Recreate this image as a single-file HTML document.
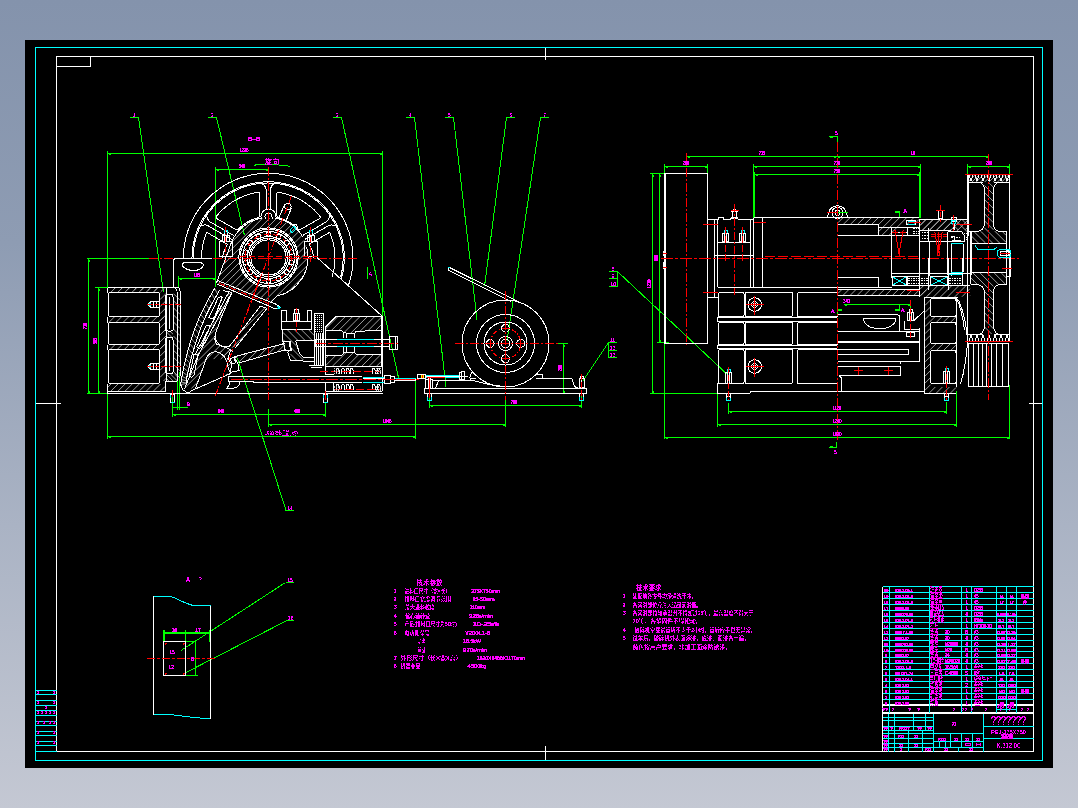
<!DOCTYPE html>
<html lang="zh"><head><meta charset="utf-8"><title>PEJ 颚式破碎机 装配图</title>
<style>
html,body{margin:0;padding:0}
body{width:1078px;height:808px;overflow:hidden;background:#8795ad linear-gradient(to bottom,#8493ac 0%,#8e9cb3 30%,#aab3c4 65%,#c4c8d3 100%);font-family:"Liberation Sans","Noto Sans CJK SC",sans-serif}
#sheet{position:absolute;left:25px;top:40px;width:1028px;height:728px;background:#000}
svg{position:absolute;left:0;top:0;width:1078px;height:808px}
svg path{fill:none;stroke-width:1}
svg text{fill:#ff00ff;font-family:"Liberation Sans","Noto Sans CJK SC",sans-serif}
</style></head><body>
<div id="sheet"></div>
<svg width="1078" height="808" viewBox="0 0 1078 808">
<g shape-rendering="crispEdges">
<path stroke="#ffffff" d="M56.5 56.5H1033.5V751.5H56.5ZM56.5 66.5L90.5 66.5L90.5 56.5M35.5 403.5L61 403.5M1029 403.5L1042.5 403.5M545.5 47.5L545.5 59.5M545.5 746L545.5 760.5"/>
<path stroke="#00ffff" d="M35.5 47.5H1042.5V760.5H35.5ZM35.5 690.5L56.5 690.5M35.5 694.5L56.5 694.5M35.5 700.5L56.5 700.5M35.5 705.5L56.5 705.5M35.5 710.5L56.5 710.5M35.5 715.5L56.5 715.5M35.5 721.5L56.5 721.5M35.5 725.5L56.5 725.5M35.5 731.5L56.5 731.5M35.5 735.5L56.5 735.5M35.5 741.5L56.5 741.5M35.5 745.5L56.5 745.5M35.5 751.5L56.5 751.5"/>
</g>
<g shape-rendering="crispEdges">
<path stroke="#00ff00" d="M130 117.5L138.5 117.5M138.5 117.5L163.5 292.5M208 117.5L216.5 117.5M216.5 117.5L244.5 235.5M333 117.5L341.5 117.5M341.5 117.5L399 380M406 117.5L414.5 117.5M414.5 117.5L446 386.5M445 117.5L453.5 117.5M453.5 117.5L477 319.5M506.5 117.5L515 117.5M506.5 117.5L484.5 286.5M540.5 117.5L549 117.5M540.5 117.5L507 341M286 510.5L294 510.5M286 510.5L237.5 358.5M107.5 153.5L382.5 153.5M110.5 154.5L108.5 154.5M379.5 154.5L381.5 154.5M107.5 151L107.5 292M107.5 393L107.5 439M382.5 151L382.5 316M215.5 169.5L268.5 169.5M218.5 170.5L216.5 170.5M265.5 170.5L267.5 170.5M215.5 167L215.5 287M254 165.5L257 164.5L272 164.5L285 165.5L290.5 166.5M88.5 258.5L88.5 393.5M89.5 261.5L89.5 259.5M89.5 390.5L89.5 392.5M86.5 258.5L149 258.5M86.5 393.5L107.5 393.5M98.5 287.5L98.5 393.5M99.5 290.5L99.5 288.5M99.5 390.5L99.5 392.5M95 287.5L107.5 287.5M178.5 278.5L215.5 278.5M181.5 279.5L179.5 279.5M212.5 279.5L214.5 279.5M178.5 276L178.5 287M172.5 390L172.5 417M177.5 372L177.5 409.5M179.5 372L179.5 409.5M172.5 407.5L188 407.5M172.5 414.5L325.5 414.5M175.5 415.5L173.5 415.5M322.5 415.5L324.5 415.5M325.5 402L325.5 417M268.5 424.5L505.5 424.5M271.5 425.5L269.5 425.5M502.5 425.5L504.5 425.5M268.5 409L268.5 427M107.5 436.5L415.5 436.5M110.5 437.5L108.5 437.5M412.5 437.5L414.5 437.5M415.5 381L415.5 439M367.5 267L367.5 279M429.5 405.5L581.5 405.5M432.5 406.5L430.5 406.5M578.5 406.5L580.5 406.5M429.5 396L429.5 408M581.5 396L581.5 408M563.5 343.5L563.5 393.5M564.5 346.5L564.5 344.5M564.5 390.5L564.5 392.5M558 343.5L568 343.5M558 393.5L568 393.5M505.5 400L505.5 427M582.5 381.5L608.5 342.5M608.5 342.5L608.5 357.5M608.5 342.5L617 342.5M608.5 350.5L617 350.5M608.5 357.5L617 357.5M617.5 271.5L730 377M617.5 271.5L617.5 286.5M609 271.5L617.5 271.5M609 278.5L617.5 278.5M609 286.5L617.5 286.5M686.5 156.5L836.5 156.5M689.5 157.5L687.5 157.5M833.5 157.5L835.5 157.5M836.5 156.5L988.5 156.5M839.5 157.5L837.5 157.5M985.5 157.5L987.5 157.5M988.5 154L988.5 159M664.5 166.5L707.5 166.5M667.5 167.5L665.5 167.5M704.5 167.5L706.5 167.5M664.5 164L664.5 176M707.5 164L707.5 181M753.5 166.5L920.5 166.5M756.5 167.5L754.5 167.5M917.5 167.5L919.5 167.5M754.5 174.5L919.5 174.5M757.5 175.5L755.5 175.5M916.5 175.5L918.5 175.5M753.5 164L753.5 218M754.5 172L754.5 218M919.5 172L919.5 218M920.5 164L920.5 218M967.5 166.5L1009.5 166.5M970.5 167.5L968.5 167.5M1006.5 167.5L1008.5 167.5M967.5 164L967.5 174M1009.5 164L1009.5 174M829 136.5L837.5 136.5M837.5 136.5L837.5 142M830 137.5L833 137.5M836.5 442L836.5 447.5M829 447.5L836.5 447.5M830 446.5L833 446.5M895 211.5L900 211.5M895 212.5L900 212.5M899.5 211L899.5 218M652.5 173.5L652.5 393.5M653.5 176.5L653.5 174.5M653.5 390.5L653.5 392.5M659.5 173.5L659.5 342.5M660.5 176.5L660.5 174.5M660.5 339.5L660.5 341.5M650 173.5L665 173.5M657 342.5L669 342.5M650 393.5L718 393.5M664.5 343L664.5 439M728.5 411.5L946.5 411.5M731.5 412.5L729.5 412.5M943.5 412.5L945.5 412.5M728.5 403L728.5 414M946.5 402L946.5 414M717.5 424.5L956.5 424.5M720.5 425.5L718.5 425.5M953.5 425.5L955.5 425.5M717.5 391L717.5 427M956.5 391L956.5 427M664.5 437.5L1009.5 437.5M667.5 438.5L665.5 438.5M1006.5 438.5L1008.5 438.5M1009.5 385L1009.5 439M844 304.5L910.5 304.5M847 305.5L845 305.5M907.5 305.5L909.5 305.5M837.5 309.5L842 309.5M837.5 310.5L842 310.5M837.5 309.5L837.5 314M910.5 302.5L910.5 310M895 309.5L899.5 309.5M895 310.5L899.5 310.5M899.5 304.5L899.5 311M163.5 632.5L210.5 632.5M163.5 633.5L210.5 633.5M163.5 630L163.5 641.5M164.5 630L164.5 641.5M185.5 630L185.5 641.5M210.5 630L210.5 642M209.5 630L209.5 642M185.5 641.5L196 641.5M195.5 641.5L195.5 675.5M185.5 675.5L198 675.5M181 650.5L285.5 582.5M285.5 582.5L294 582.5M184 673.5L287 620.5M287 620.5L294 620.5"/>
</g>
<g shape-rendering="crispEdges">
<path stroke="#c8c8c8" shape-rendering="geometricPrecision" style="stroke-width:.8" d="M114.6 288.5L115.1 288.0M121.2 288.9L122.1 288.0M127.8 289.4L129.2 288.0M134.4 289.8L136.3 288.0M141.1 290.3L143.3 288.0M147.7 290.7L150.4 288.0M154.3 291.2L157.5 288.0M160.9 291.6L164.5 288.0M110.6 292.5L115.1 288.0M117.6 292.5L122.1 288.0M124.7 292.5L129.2 288.0M131.8 292.5L136.3 288.0M138.8 292.5L143.3 288.0M145.9 292.5L150.4 288.0M153.0 292.5L157.5 288.0M108.8 322.5L114.3 317.0M115.9 322.5L121.4 317.0M123.0 322.5L128.5 317.0M130.0 322.5L135.5 317.0M137.1 322.5L142.6 317.0M144.2 322.5L149.7 317.0M151.3 322.5L156.8 317.0M158.3 322.5L163.8 317.0M165.4 322.5L166.5 321.4M110.1 349.5L114.6 345.0M117.2 349.5L121.7 345.0M124.3 349.5L128.8 345.0M131.3 349.5L135.8 345.0M138.4 349.5L142.9 345.0M145.5 349.5L150.0 345.0M152.5 349.5L157.0 345.0M159.6 349.5L164.1 345.0M108.0 387.0L111.0 384.0M110.5 391.5L118.0 384.0M117.6 391.5L125.1 384.0M124.7 391.5L132.2 384.0M131.8 391.5L139.3 384.0M138.8 391.5L146.3 384.0M145.9 391.5L153.4 384.0M153.0 391.5L160.5 384.0M160.0 391.5L165.0 386.5M160.0 292.5L160.5 292.0M160.0 299.6L166.5 293.1M160.0 306.7L166.5 300.2M160.0 313.8L166.5 307.3M160.0 320.8L166.5 314.3M160.0 327.9L166.5 321.4M160.0 335.0L166.5 328.5M160.0 342.0L166.5 335.5M160.0 349.1L166.5 342.6M160.0 356.2L166.5 349.7M160.0 363.3L166.5 356.8M160.0 370.3L166.5 363.8M160.0 377.4L166.5 370.9M163.5 381.0L166.5 378.0M173.5 293.7L180.0 300.2M173.5 300.8L180.0 307.3M173.5 307.9L180.0 314.4M173.5 314.9L180.0 321.4M173.5 322.0L180.0 328.5M173.5 329.1L180.0 335.6M173.5 336.1L180.0 342.6M173.5 343.2L180.0 349.7M173.5 350.3L180.0 356.8M173.5 357.3L180.0 363.8M173.5 364.4L180.0 370.9M173.5 371.5L180.0 378.0M169.8 331.0L173.0 334.2M166.5 332.0L172.0 337.5M166.5 336.2L167.8 337.5M174.6 374.0L177.0 376.4M170.4 374.0L177.0 380.6M166.5 374.4L173.1 381.0M166.5 378.6L168.9 381.0"/>
<path stroke="#ffffff" d="M107.5 393.5L383 393.5M107.5 393.5L107.5 383.5M107.5 287.5L178.5 287.5M107.5 287.5L107.5 293M107.5 316.5L107.5 322.5M107.5 344.5L107.5 349.5M107.5 383.5L107.5 391.5M107.5 391.5L165.5 391.5M165.5 391.5L165.5 381.5L177 381.5M110.5 292.5H157.5Q159.5 292.5 159.5 294.5V314.5Q159.5 316.5 157.5 316.5H110.5Q108.5 316.5 108.5 314.5V294.5Q108.5 292.5 110.5 292.5ZM110.5 322.5H157.5Q159.5 322.5 159.5 324.5V342.5Q159.5 344.5 157.5 344.5H110.5Q108.5 344.5 108.5 342.5V324.5Q108.5 322.5 110.5 322.5ZM110.5 349.5H157.5Q159.5 349.5 159.5 351.5V381.5Q159.5 383.5 157.5 383.5H110.5Q108.5 383.5 108.5 381.5V351.5Q108.5 349.5 110.5 349.5ZM166.5 287.5L166.5 381.5M177.5 295L177.5 381M178.5 287.5Q180.5 290 180.5 296V376M175.5 287.5Q177.5 291 177.5 296M165.5 296Q165.5 294.5 167.5 294.5H171Q173 294.5 173 296.5V329.5Q173 331 171 331H167.5Q165.5 331 165.5 329.5ZM165.5 339Q165.5 337.5 167.5 337.5H171Q173 337.5 173 339.5V372Q173 373.5 171 373.5H167.5Q165.5 373.5 165.5 372ZM169.5 297L169.5 329M169.5 340L169.5 371M159 301.5L151 301.5L148 304.5L151 307.5L159 307.5M153.5 301.5L153.5 307.5M156.5 301.5L156.5 307.5M159 363.5L151 363.5L148 366.5L151 369.5L159 369.5M153.5 363.5L153.5 369.5M156.5 363.5L156.5 369.5M173.5 287.5V261Q173.5 258.5 176 258.5H212M184 262.5H201L203.5 264.5Q203.5 267.5 199.5 269.5Q193.5 271.5 187.5 269.5Q182 267 182 264.5ZM170.5 394.5H174.5V402.5H170.5Z"/>
<path stroke="#00ffff" d="M151 303L149 304.5L151 306M151 365L149 366.5L151 368M170.5 394.5L170.5 397.5M170.5 402.5L174.5 402.5"/>
<path stroke="#ff0000" d="M172.5 390L172.5 397"/>
<path stroke="#ff0000" stroke-dasharray="6 2 4 2" d="M147 304.5L182 304.5M147 366.5L182 366.5"/>
</g>
<g shape-rendering="crispEdges">
<path stroke="#c8c8c8" shape-rendering="geometricPrecision" style="stroke-width:.8" d="M232.5 241.3L252.3 221.5M229.5 251.3L262.3 218.5M229.1 258.8L240.2 247.8M258.8 229.2L269.8 218.1M229.8 265.2L238.6 256.4M267.4 227.6L276.2 218.8M231.3 270.7L239.0 263.0M274.0 228.0L281.7 220.3M233.5 275.6L240.6 268.5M279.5 229.6L286.6 222.5M236.1 280.1L243.0 273.2M284.2 232.0L291.1 225.1M239.2 284.0L246.0 277.3M288.3 235.0L295.0 228.2M242.8 287.5L249.6 280.7M291.7 238.6L298.5 231.8M246.9 290.5L253.8 283.6M294.6 242.8L301.5 235.9M251.4 293.1L258.7 285.8M296.8 247.7L304.1 240.4M256.4 295.1L264.4 287.2M298.2 253.4L306.1 245.4M262.2 296.4L271.3 287.4M298.4 260.3L301.1 257.5M301.1 257.5L307.4 251.2M268.7 297.0L280.9 284.8M295.8 269.9L308.0 257.7M276.6 296.2L307.2 265.6M288.0 291.8L302.8 277.0"/>
<path stroke="#ffffff" d="M183.40 258.00A84.8 84.8 0 1 1 348.38 285.61M192.00 258.00A76.2 76.2 0 1 1 341.45 279.00M193.20 258.00A75 75 0 1 1 340.64 277.41M302.6 235.6L326.8 221.6Q329.5 219.4 329.6 215.6M304.8 239.4L329.0 225.4Q332.3 224.2 335.6 226.0M266.0 208.5L266.0 189.0Q265.4 185.6 262.2 183.6M270.4 208.5L270.4 189.0Q271.0 185.6 274.2 183.6M231.6 239.4L207.4 225.4Q204.1 224.2 200.8 226.0M233.8 235.6L209.6 221.6Q206.9 219.4 206.8 215.6M319.7 216.0L317.7 213.6L314.1 209.8L310.1 206.4L305.9 203.2L301.4 200.4L296.8 198.0L292.0 195.9L287.0 194.2L281.9 192.9L278.9 192.4Q276.7 192.0 276.7 194.2L276.7 215.2Q276.7 217.4 278.8 217.9L279.3 218.0L281.8 218.8L284.2 219.7L286.6 220.8L288.9 222.1L291.2 223.4L293.3 225.0L295.4 226.6L297.3 228.4L297.6 228.7Q299.1 230.3 301.0 229.2L319.2 218.8Q321.1 217.7 319.7 216.0ZM257.5 192.4L254.5 192.9L249.4 194.2L244.4 195.9L239.6 198.0L234.9 200.4L230.5 203.2L226.3 206.4L222.3 209.8L218.7 213.6L216.7 216.0Q215.3 217.7 217.2 218.8L235.4 229.2Q237.3 230.3 238.8 228.7L239.1 228.4L241.0 226.6L243.1 225.0L245.2 223.4L247.4 222.1L249.8 220.8L252.2 219.7L254.6 218.8L257.1 218.0L257.6 217.9Q259.7 217.4 259.7 215.2L259.7 194.2Q259.7 192.0 257.5 192.4ZM227.4 244.3L206.7 232.3A66.7 66.7 0 0 0 201.5 258.0M227.4 244.3Q223.4 250.3 222.4 258.0M309.0 244.3L329.7 232.3A66.7 66.7 0 0 1 332.0 277.5M309.0 244.3Q313.0 250.3 314.0 258.0M230.91 243.82A40 40 0 0 1 261.55 218.11M275.45 218.11A40 40 0 0 1 303.14 237.50M306.65 247.28A39.5 39.5 0 0 1 276.71 296.14M238.9 257.5a29.6 29.6 0 1 0 59.2 0a29.6 29.6 0 1 0 -59.2 0M240.3 257.5a28.2 28.2 0 1 0 56.4 0a28.2 28.2 0 1 0 -56.4 0M242.5 257.5a26 26 0 1 0 52 0a26 26 0 1 0 -52 0M247.5 257.5a21 21 0 1 0 42 0a21 21 0 1 0 -42 0M249.3 257.5a19.2 19.2 0 1 0 38.4 0a19.2 19.2 0 1 0 -38.4 0M250.9 257.5a17.6 17.6 0 1 0 35.2 0a17.6 17.6 0 1 0 -35.2 0M266.2 234a2.3 2.3 0 1 0 4.6 0a2.3 2.3 0 1 0 -4.6 0M256.004 236.327a2.3 2.3 0 1 0 4.6 0a2.3 2.3 0 1 0 -4.6 0M247.827 242.848a2.3 2.3 0 1 0 4.6 0a2.3 2.3 0 1 0 -4.6 0M243.289 252.271a2.3 2.3 0 1 0 4.6 0a2.3 2.3 0 1 0 -4.6 0M243.289 262.729a2.3 2.3 0 1 0 4.6 0a2.3 2.3 0 1 0 -4.6 0M247.827 272.152a2.3 2.3 0 1 0 4.6 0a2.3 2.3 0 1 0 -4.6 0M256.004 278.673a2.3 2.3 0 1 0 4.6 0a2.3 2.3 0 1 0 -4.6 0M266.2 281a2.3 2.3 0 1 0 4.6 0a2.3 2.3 0 1 0 -4.6 0M276.396 278.673a2.3 2.3 0 1 0 4.6 0a2.3 2.3 0 1 0 -4.6 0M284.573 272.152a2.3 2.3 0 1 0 4.6 0a2.3 2.3 0 1 0 -4.6 0M289.111 262.729a2.3 2.3 0 1 0 4.6 0a2.3 2.3 0 1 0 -4.6 0M289.111 252.271a2.3 2.3 0 1 0 4.6 0a2.3 2.3 0 1 0 -4.6 0M284.573 242.848a2.3 2.3 0 1 0 4.6 0a2.3 2.3 0 1 0 -4.6 0M276.396 236.327a2.3 2.3 0 1 0 4.6 0a2.3 2.3 0 1 0 -4.6 0M261 219V216.5A7.5 7.5 0 0 1 276 216.5V219M265 218.5V216.5A3.5 3.5 0 0 1 272 216.5V218.5M219 241.5H232V256H219ZM222 235.5H229V241.5H222ZM224.5 235.5L224.5 241.5M226.5 235.5L226.5 241.5M224 230.5H227V235.5H224ZM304 241.5H317V256H304ZM307 235.5H314V241.5H307ZM309.5 235.5L309.5 241.5M311.5 235.5L311.5 241.5M309 230.5H312V235.5H309ZM278.5 219L284.5 204.5M285.5 222L291.5 208M284.8 206.5a3.2 3.2 0 1 0 6.4 0a3.2 3.2 0 1 0 -6.4 0M292 224.5L296 224.5L298 228"/>
<path stroke="#00ffff" d="M224 232.5L224 230.5L227 230.5L227 232.5M309 232.5L309 230.5L312 230.5L312 232.5M290 230L294 226L296 229L292 233Z"/>
<path stroke="#ff0000" stroke-dasharray="5 2 1 2" d="M245.0 257.5a23.5 23.5 0 1 0 47 0a23.5 23.5 0 1 0 -47 0M225.5 227L225.5 262M310.5 227L310.5 262"/>
<path stroke="#ff0000" stroke-dasharray="7 2 1 2" d="M291.5 196L246 316"/>
<path stroke="#ff0000" stroke-dasharray="9 2 2 2" d="M149 258.5L173 258.5M213 258.5L358 258.5M268.5 167L268.5 400"/>
<path stroke="#ff0000" stroke-dasharray="6 3" d="M240 256.5L318 256.5"/>
</g>
<g shape-rendering="crispEdges">
<path stroke="#c8c8c8" shape-rendering="geometricPrecision" style="stroke-width:.8" d="M214.57 288.38L217.491 293.804M211.599 293.687L214.649 298.897M208.627 298.993L211.84 303.99M205.814 304.22L209.291 309.084M203.266 309.313L206.743 314.177M200.717 314.407L204.484 319.063M198.649 319.183L202.534 323.73M196.74 323.853L200.583 328.397M194.858 328.577L198.849 333.43M193.159 333.67L197.15 338.524M191.46 338.763L195.491 343.617M189.867 343.857L193.963 348.71M188.381 348.95L192.436 353.804M186.896 354.043L191.166 358.606M185.783 358.72L190.061 363.224M184.724 363.337L188.957 367.841M183.718 367.861L188.103 371.674M182.868 372.105L187.254 375.495M182.019 376.349L186.635 378.704M181.433 379.53L186.425 380.826M181.007 382.075L186.216 382.948M180.58 384.62L186.16 383.51M308.3 329.5L314.0 335.2M301.2 329.5L312.4 340.7M294.2 329.5L305.3 340.7M287.1 329.5L298.2 340.7M282.8 332.3L294.1 343.6M282.8 339.4L284.8 341.4M290.1 346.6L291.4 348.0M294.0 343.5L297.6 347.1M291.3 347.9L303.4 360.0M290.6 354.2L297.1 360.7M325.5 329.0L338.3 316.2M331.8 330.1L345.7 316.2M339.1 330.1L353.0 316.2M344.1 332.5L360.4 316.2M350.5 333.4L367.8 316.2M360.2 331.1L375.1 316.2M367.7 331.0L382.0 316.6M375.2 330.8L382.0 324.0M325.7 358.2L328.8 355.1M325.7 365.6L336.1 355.1M332.3 366.3L346.3 352.4M339.7 366.3L353.6 352.4M347.0 366.3L358.7 354.6M354.4 366.3L366.1 354.6M361.7 366.3L373.4 354.6M369.1 366.3L380.8 354.6M376.4 366.3L382.0 360.8"/>
<path stroke="#ffffff" d="M214.57 288.38L206.77 302.31L200.08 315.68L195.07 327.94L190.61 341.31L186.71 354.68L183.93 366.8L181.7 377.94L180.58 384.62L182.81 389.64L186.71 392.42L190.06 392.98M219.58 290.06L212.12 303.43L205.43 316.8L200.31 329.05L195.85 342.42L191.84 355.79L188.94 367.91L186.71 377.94L186.16 383.51M221.25 296.74L218.47 297.3L209 317.35L211.78 319.03L214.57 317.35L221.81 297.86ZM222.14 297.3L215.13 317.35M209.55 325.15L206.21 325.15L196.74 346.88L199.19 348.55L200.97 347.44L210.11 326.27ZM210.45 325.71L201.42 347.44M197.3 354.54L193.96 354.54L189.5 375.71L191.73 377.38L193.96 375.15L197.86 355.65ZM222.92 290.61L231.84 292.28M231.84 292.28L197.86 355.79M197.86 355.65L184.48 389.08M229.05 291.73L195.07 354.68M217.91 280.58L270.84 302.31M216.8 283.93L268.05 305.65M270.84 302.31L274.74 303.43L279.75 306.77L276.96 309L272.51 307.88L268.05 305.65M231.84 292.84L222.37 314.57L215.13 334.62Q214.01 342.42 222.37 346.32L229.05 346.88L260.25 306.21M234.62 348.55L266.94 308.44M260.25 306.21L266.94 308.44M195.63 387.97L206.21 359Q208.44 352.31 215.68 351.75Q223.48 352.87 226.82 361.23Q227.94 369.03 230.72 373.48L190.06 391.31M214.57 337.83L216.24 343.96L223.48 346.74L230.72 349.53L233.51 352.31M230.72 349.53L227.94 358.44L231.84 364.57L230.17 372.37L239.08 370.7L237.97 363.45L234.07 357.88L236.85 356.77M230.17 358.44L234.07 357.33L235.74 362.9L231.84 364.01ZM234.07 356.77L284.76 343.4M239.08 362.9L285.88 349.53M228 376.5L326 376.5M228 376.5L228 381.5L253.5 381.5L253.5 382.5L362 382.5M229.5 382V384L227 388H234Q239.5 387 240 382M281.5 321.5H311.5V329.5H281.5ZM281.5 321.5L281.5 310.5L286.5 310.5L286.5 321.5M307.5 321.5L307.5 310.5L311.5 310.5L311.5 321.5M293.5 313.5H299.5V320.5H293.5ZM294.5 309.5H298.5V313.5H294.5ZM295.5 313.5L295.5 320.5M297.5 313.5L297.5 320.5M282.81 329.53L282.81 341.23L288.94 341.78L290.61 349.03L287.83 352.37L290.61 360.72L314.01 361.28M295.63 340.67L314.01 340.67M295.63 340.67L299.53 353.48L303.43 357.38L314.01 357.38M283.37 341.23L290.61 341.23L291.17 350.14L285.04 350.7ZM314.5 313.5H323.5V365.5H314.5ZM316.5 333L316.5 365.5M318.5 333L318.5 365.5M320.5 333L320.5 365.5M322.5 333L322.5 365.5M309 365.5L314 365.5M311 367.5L322 367.5M325.5 327.5L325.5 375M325.15 327.3L336.3 316.16L381.98 316.16L381.98 366.85L334.62 366.85M325.71 330.08L341.31 330.08L343.54 332.31L346.88 333.43L354.68 333.43L356.35 331.2L381.98 330.64M325.71 355.15L341.87 355.15L344.09 352.37L354.68 352.37L356.35 354.6L381.98 354.6M343.54 332.31L343.54 337.88M354.68 333.43L354.68 337.88M346.88 333.43L346.88 337.88M343.54 346.8L343.54 352.37M354.68 346.8L354.68 352.37M346.88 346.8L346.88 352.37M325.71 366.3L325.71 374.65L333.51 374.65M325.71 366.85L334.62 366.85M315.13 339.55L335.74 339.55L335.74 339L389.78 339M315.13 346.24L335.74 346.24L335.74 346.8L389.78 346.8M315.5 339.5L315.5 346.5M389.5 336.5H397.5V349.5H389.5ZM395.5 336.5L395.5 349.5M317 257.5L382 316M382.5 316L382.5 391M325.5 382.5H333.5V391.5H325.5ZM325.5 391.5L382 391.5M326 376.5L362 376.5M363 378.5L384 378.5M336 374V370Q337.5 367 339 370V374M336 390V386Q337.5 383 339 386V390M341.5 374V370Q343.0 367 344.5 370V374M341.5 390V386Q343.0 383 344.5 386V390M346 374V370Q347.5 367 349 370V374M346 390V386Q347.5 383 349 386V390M350 374V370Q351.5 367 353 370V374M350 390V386Q351.5 383 353 386V390M372 374V370Q373.5 367 375 370V374M372 390V386Q373.5 383 375 386V390M377 374V370Q378.5 367 380 370V374M377 390V386Q378.5 383 380 386V390M384.5 375.5H390.5V383.5H384.5ZM390.5 376.5H394.5V382.5H390.5ZM395 380.5L415.5 380.5M415.5 378L415.5 381M323.5 394.5H327.5V402.5H323.5Z"/>
<path stroke="#00ffff" d="M276.96 306.21L280.31 307.88L277.52 308.77M337 339.5L373.5 339.5M337 346.5L373.5 346.5M363 377.5L384 377.5M363 382.5L384 382.5M395 378.5L415.5 378.5M323.5 395L323.5 398M327.5 395L327.5 398M323.5 402.5L327.5 402.5"/>
<path stroke="#ff0000" d="M396 379.5L415 379.5M325.5 391L325.5 400"/>
<path stroke="#ff0000" stroke-dasharray="6 2 2 2" d="M219.03 283.15L269.72 303.98"/>
<path stroke="#ff0000" stroke-dasharray="7 2 2 2" d="M259.14 280.03L214.57 397.99"/>
<path stroke="#ff0000" stroke-dasharray="12 2 3 2" d="M231 379.5L420 379.5"/>
<path stroke="#ff0000" stroke-dasharray="5 2" d="M296.5 307.5L296.5 332"/>
<path stroke="#ffffff" stroke-dasharray="1 1" d="M315 315.5L323 315.5M315 317.5L323 317.5M315 319.5L323 319.5M315 321.5L323 321.5M315 323.5L323 323.5M315 325.5L323 325.5M315 327.5L323 327.5M315 329.5L323 329.5M315 331.5L323 331.5"/>
<path stroke="#ff0000" stroke-dasharray="10 2 3 2" d="M316 343.5L398 343.5"/>
<path stroke="#ff0000" stroke-dasharray="8 3" d="M320 371.5L381 371.5M334 389.5L381 389.5"/>
<path stroke="#c8c8c8" stroke-dasharray="1 1" d="M334 368.5L340 368.5M334 370L340 370M334 371.5L340 371.5M334 373L340 373M334 386L340 386M334 387.5L340 387.5M334 389L340 389M334 390.5L340 390.5M376 368.5L382 368.5M376 370L382 370M376 371.5L382 371.5M376 373L382 373M376 386L382 386M376 387.5L382 387.5M376 389L382 389M376 390.5L382 390.5"/>
</g>
<g shape-rendering="crispEdges">
<path stroke="#c8c8c8" shape-rendering="geometricPrecision" style="stroke-width:.8" d="M231.6 242.2L231.9 241.9M227.4 253.4L230.7 250.1M223.3 264.6L229.5 258.4M219.1 275.8L230.1 264.9M218.4 283.7L232.1 270.0M223.6 285.5L234.1 275.0M228.8 287.4L236.1 280.1M234.0 289.2L239.8 283.4M239.2 291.1L243.6 286.8M244.5 292.9L247.3 290.1M249.7 294.8L251.6 292.9M254.9 296.6L257.1 294.4M260.1 298.5L262.7 295.9M265.3 300.4L268.3 297.4M270.5 302.2L274.3 298.4M226.1 297.1L230.8 292.4M217.8 312.5L227.5 302.9M209.6 327.8L222.1 315.3M201.3 343.2L218.1 326.4M196.4 355.2L214.8 336.7M201.5 357.1L215.5 343.1M206.6 359.1L220.3 345.4M213.6 359.1L226.1 346.6M220.7 359.1L230.5 349.3M227.8 359.1L228.0 358.9M194.5 364.2L201.6 357.0M189.7 376.0L206.7 359.0M185.0 387.7L202.4 370.4M191.4 388.4L198.0 381.8M220.3 352.4L221.9 350.8M224.5 355.4L230.2 349.6M199.9 387.0L200.5 386.4M226.5 360.4L228.1 358.8M212.5 381.5L213.9 380.0M227.6 366.4L230.9 363.1M225.1 375.9L227.3 373.7M229.5 371.5L230.6 370.5M239.5 333.3L265.0 307.8M232.0 347.8L248.5 331.3M235.5 358.5L238.3 355.6M238.7 362.4L247.9 353.1M247.7 360.4L257.5 350.6M257.6 357.6L267.1 348.0M267.5 354.8L276.7 345.5M277.4 352.0L284.9 344.4"/>
<path stroke="#ffffff" d="M232 241L216.5 283M270.8 302.3L277.5 295.5"/>
</g>
<g shape-rendering="crispEdges">
<path stroke="#ffffff" d="M462 343.5a43.5 43.5 0 1 0 87 0a43.5 43.5 0 1 0 -87 0M476.5 343.5a29 29 0 1 0 58 0a29 29 0 1 0 -58 0M484 343.5a21.5 21.5 0 1 0 43 0a21.5 21.5 0 1 0 -43 0M498.5 343.5a7 7 0 1 0 14 0a7 7 0 1 0 -14 0M501.3 343.5a4.2 4.2 0 1 0 8.4 0a4.2 4.2 0 1 0 -8.4 0M516.8 343.5a3.9 3.9 0 1 0 7.8 0a3.9 3.9 0 1 0 -7.8 0M501.6 358.7a3.9 3.9 0 1 0 7.8 0a3.9 3.9 0 1 0 -7.8 0M486.4 343.5a3.9 3.9 0 1 0 7.8 0a3.9 3.9 0 1 0 -7.8 0M501.6 328.3a3.9 3.9 0 1 0 7.8 0a3.9 3.9 0 1 0 -7.8 0M448.65 267.08L518.85 302M447.91 270.06L511.42 301.62M448.65 267.08L447.91 270.06M469.64 378.13L471.49 372.93L474.28 372.93M542.06 378.13L542.06 374.05L537.42 374.05M470.5 378.5L476 378.5M536 378.5L572 378.5M571.77 378.69L574.56 386.49L578.27 388.35M470.57 379.99L489.14 384.63L503.99 386.49M470.57 378.13L470.57 380.92M424.5 388.5H586.5V393.5H424.5ZM425.07 388.35L425.07 379.99L432.5 379.99L432.5 388.35M439 379.99L435.28 388.35M433 380.5L470 380.5M417.5 374.5H425.5V378.5H417.5ZM426 376.5L468 376.5M459.5 372.5H461.5V379.5H459.5ZM461.5 371.5H464.5V379.5H461.5ZM428.5 378L428.5 388M430.5 378L430.5 388M579.5 378.5H584.5V387.5H579.5ZM580.5 376.5H583.5V378.5H580.5ZM581.5 378.5L581.5 387.5M427.5 393.5H431.5V400.5H427.5ZM579.5 393.5H583.5V400.5H579.5Z"/>
<path stroke="#00ffff" d="M448.28 267.83L449.77 267.46M426 375.5L459 375.5M426 377.5L459 377.5M427.5 400.5L431.5 400.5M427.5 397L427.5 400.5M431.5 397L431.5 400.5M579.5 400.5L583.5 400.5M579.5 397L579.5 400.5M583.5 397L583.5 400.5"/>
<path stroke="#ff0000" d="M520.7 339.5L520.7 347.5M490.3 339.5L490.3 347.5M502.5 358.7L508.5 358.7M502.5 328.3L508.5 328.3M422.5 375L422.5 378M427 377.5L445 377.5M429.5 377L429.5 398"/>
<path stroke="#ffff00" d="M421.5 375L421.5 378M423.5 375L423.5 378"/>
<path stroke="#ff0000" stroke-dasharray="5 2 1 2" d="M490.3 343.5a15.2 15.2 0 1 0 30.4 0a15.2 15.2 0 1 0 -30.4 0"/>
<path stroke="#ff0000" stroke-dasharray="9 2 2 2" d="M455 343.5L558 343.5M505.5 291L505.5 400"/>
<path stroke="#ff0000" stroke-dasharray="6 2" d="M581.5 374L581.5 400"/>
</g>
<g shape-rendering="crispEdges">
<path stroke="#c8c8c8" shape-rendering="geometricPrecision" style="stroke-width:.8" d="M838.0 222.7L842.7 218.0M842.7 225.0L849.7 218.0M849.8 225.0L856.8 218.0M856.9 225.0L863.9 218.0M863.9 225.0L870.9 218.0M871.0 225.0L878.0 218.0M878.0 225.1L885.1 218.0M878.0 232.2L892.2 218.0M882.2 235.0L899.2 218.0M889.3 235.0L906.3 218.0M906.4 225.0L913.4 218.0M913.4 225.0L919.0 219.4M838.0 293.4L841.4 290.0M842.9 295.5L848.4 290.0M850.0 295.5L855.5 290.0M857.1 295.5L862.6 290.0M864.2 295.5L869.7 290.0M871.2 295.5L876.7 290.0M878.3 295.5L883.8 290.0M885.4 295.5L890.9 290.0M892.4 295.5L897.9 290.0M899.5 295.5L905.0 290.0M906.6 295.5L912.1 290.0M913.7 295.5L919.2 290.0M920.7 295.5L926.2 290.0M927.8 295.5L930.0 293.3"/>
<path stroke="#ffffff" d="M664.5 173.5H707.5V343.5H664.5ZM665.5 173.5L665.5 343.5M664.5 251.5L663.5 251.5L663.5 255.5L664.5 255.5M664.5 262L663.5 262L663.5 268.5M707.5 219.5L718 219.5L719 217.5L723 217.5L724 219.5L730 219.5L732 217.5L737 217.5L738.5 219.5L753.5 219.5M714.5 219.5L714.5 297M717.5 219.5L717.5 287M750.5 219.5L750.5 287M753.5 217.5L753.5 287M762.5 217.5L762.5 287M753.5 217.5L919 217.5M707.5 297.5L718 297.5M707.5 343.5L707.5 297.5M732.5 211.5H736.5V218H732.5ZM731 211.5L734.5 208.5L738 211.5M722.5 233.5H728.5V241.5H722.5ZM724.5 233.5L724.5 241.5M726.5 233.5L726.5 241.5M724 230.5H727V233.5H724ZM739.5 233.5H745.5V241.5H739.5ZM741.5 233.5L741.5 241.5M743.5 233.5L743.5 241.5M741 230.5H744V233.5H741ZM717.5 255.5L717.5 242.5L750.5 242.5L750.5 255.5M714.5 255.5L753.5 255.5M718 287.5L837 287.5M720 292.5H742.5Q744 292.5 744 294V315Q744 316.5 742.5 316.5H720Q718.5 316.5 718.5 315V294Q718.5 292.5 720 292.5ZM746.5 292.5H791Q792.5 292.5 792.5 294V315Q792.5 316.5 791 316.5H746.5Q745 316.5 745 315V294Q745 292.5 746.5 292.5ZM837.5 292.5H799Q797.5 292.5 797.5 294.0V315.0Q797.5 316.5 799 316.5H837.5M720 322.5H742.5Q744 322.5 744 324V343Q744 344.5 742.5 344.5H720Q718.5 344.5 718.5 343V324Q718.5 322.5 720 322.5ZM746.5 322.5H791Q792.5 322.5 792.5 324V343Q792.5 344.5 791 344.5H746.5Q745 344.5 745 343V324Q745 322.5 746.5 322.5ZM837.5 322.5H799Q797.5 322.5 797.5 324.0V343.0Q797.5 344.5 799 344.5H837.5M720 349.5H742.5Q744 349.5 744 351V382Q744 383.5 742.5 383.5H720Q718.5 383.5 718.5 382V351Q718.5 349.5 720 349.5ZM746.5 349.5H791Q792.5 349.5 792.5 351V382Q792.5 383.5 791 383.5H746.5Q745 383.5 745 382V351Q745 349.5 746.5 349.5ZM837.5 349.5H799Q797.5 349.5 797.5 351.0V382.0Q797.5 383.5 799 383.5H837.5M837 317.5L717.5 317.5L717.5 321.5L837 321.5M837 345.5L717.5 345.5L717.5 348.5L837 348.5M718 383.5L717.5 393.5L749.5 393.5L751 391.5L924 391.5M747.9 304.5a6.8 6.8 0 1 0 13.6 0a6.8 6.8 0 1 0 -13.6 0M751.7 304.5a3 3 0 1 0 6 0a3 3 0 1 0 -6 0M753.4 304.5a1.3 1.3 0 1 0 2.6 0a1.3 1.3 0 1 0 -2.6 0M747.9 366.5a6.8 6.8 0 1 0 13.6 0a6.8 6.8 0 1 0 -13.6 0M751.7 366.5a3 3 0 1 0 6 0a3 3 0 1 0 -6 0M753.4 366.5a1.3 1.3 0 1 0 2.6 0a1.3 1.3 0 1 0 -2.6 0M725.5 372.5H731.5V383H725.5ZM727.5 372.5L727.5 383M729.5 372.5L729.5 383M727 369.5H730V372.5H727ZM726.5 393.5H730.5V400.5H726.5ZM726.5 396.5L730.5 396.5M827.5 217.5L828.5 213A9.2 9.2 0 0 1 846.5 213L847.5 217.5M831.9 212.8a5.6 5.6 0 1 0 11.2 0a5.6 5.6 0 1 0 -11.2 0M834.9 212.8a2.6 2.6 0 1 0 5.2 0a2.6 2.6 0 1 0 -5.2 0M837.5 224.5L878 224.5L878 235.5M837.5 235.5L892 235.5M878 227.5L892 227.5M891.5 227L891.5 277.5M837.5 277.5L878.5 277.5L878.5 287.5M837.5 287.5L892 287.5M837.5 289.5L920 289.5M837.5 295.5L920 295.5M837.5 314.5L897 314.5L899.5 316L899.5 331.5M837.5 331.5L920 331.5M863.5 318.5H895L896 321Q893 326 886 328Q878 330 870 327Q864 324 863.5 318.5M837.5 341.5L920 341.5M837.5 342.5L920 342.5M837.5 349.5L908.5 349.5L908.5 354.5L837.5 354.5M837.5 361.5L920 361.5M919.5 328L919.5 361.5M837.5 366.5L900.5 366.5L900.5 375.5L838.5 375.5M900.5 364L900.5 361.5M838.5 376.5L840 376.5L841.5 378L841.5 391M907.5 312.5H913.5V320.5H907.5ZM909.5 312.5L909.5 320.5M911.5 312.5L911.5 320.5M909 309.5H912V312.5H909ZM904.5 320.5L904.5 329L919.5 329M914 320.5L924 311M906.5 332.5H914.5V336.5H906.5Z"/>
<path stroke="#00ffff" d="M724 233L724 230.5L727 230.5L727 233M741 233L741 230.5L744 230.5L744 233M727 372L727 369.5L730 369.5L730 372M726.5 400.5L730.5 400.5M726.5 397.5L726.5 400.5M730.5 397.5L730.5 400.5"/>
<path stroke="#ff0000" d="M663 253.5L667 253.5M663 267.5L667 267.5M731 210.5L739 210.5M703 224.5L718 224.5M754 222.5L766 222.5M703 292.5L718 292.5M746 304.5L764 304.5M754.5 295.5L754.5 314.5M746 366.5L764 366.5M754.5 357.5L754.5 376.5M827 212.5L837 212.5M854 370.5L863 370.5M858.5 366.5L858.5 374.5M884 370.5L893 370.5M888.5 366.5L888.5 374.5"/>
<path stroke="#00ff00" d="M838 212.5L848 212.5M837.5 208L837.5 213"/>
<path stroke="#ff0000" stroke-dasharray="9 2 2 2" d="M686.5 153L686.5 345"/>
<path stroke="#ff0000" stroke-dasharray="12 2 3 2" d="M661 258.5L1019 258.5"/>
<path stroke="#ff0000" stroke-dasharray="10 3" d="M765 256.5L920 256.5"/>
<path stroke="#ff0000" stroke-dasharray="8 2 2 2" d="M734.5 204L734.5 295"/>
<path stroke="#ff0000" stroke-dasharray="7 2" d="M725.5 227L725.5 262M742.5 227L742.5 262"/>
<path stroke="#ff0000" stroke-dasharray="6 2" d="M728.5 367L728.5 400M910.5 300L910.5 340"/>
<path stroke="#ff0000" stroke-dasharray="10 2 2 2" d="M837.5 142L837.5 442"/>
</g>
<g shape-rendering="crispEdges">
<path stroke="#c8c8c8" shape-rendering="geometricPrecision" style="stroke-width:.8" d="M920.0 225.5L925.5 220.0M921.6 231.0L932.6 220.0M928.7 231.0L939.7 220.0M935.7 231.0L946.7 220.0M942.8 231.0L953.8 220.0M949.9 231.0L960.9 220.0M956.9 231.0L967.9 220.0M965.3 229.7L968.0 227.0M961.4 218.9L968.2 225.7M954.3 218.9L967.3 231.9M950.6 222.3L958.4 230.1M950.6 229.3L951.3 230.1M919.9 225.6L926.6 218.9M922.5 230.1L933.7 218.9M929.6 230.1L940.7 218.9M936.7 230.1L947.8 218.9M943.7 230.1L950.6 223.2M920.0 289.2L923.2 286.0M920.0 296.2L930.2 286.0M926.3 297.0L937.3 286.0M933.4 297.0L944.4 286.0M940.4 297.0L951.4 286.0M947.5 297.0L958.5 286.0M954.6 297.0L965.6 286.0M962.0 296.7L970.0 288.7M969.7 296.0L970.0 295.7M925.0 298.3L925.3 298.0M925.0 305.4L930.5 299.9M925.0 312.4L930.5 306.9M925.0 319.5L930.5 314.0M925.0 326.6L930.5 321.1M925.0 333.7L930.5 328.2M925.0 340.7L930.5 335.2M925.0 347.8L930.5 342.3M925.0 354.9L930.5 349.4M925.0 361.9L930.5 356.4M925.0 369.0L930.5 363.5M925.0 376.1L930.5 370.6M925.0 383.1L930.5 377.6M925.0 390.2L930.5 384.7M929.3 393.0L935.3 387.0M936.4 393.0L942.4 387.0M943.4 393.0L949.4 387.0M950.5 393.0L956.0 387.5M930.5 321.1L934.6 317.0M936.2 322.5L941.7 317.0M943.2 322.5L948.7 317.0M950.3 322.5L955.8 317.0M930.5 349.4L935.9 344.0M936.4 350.5L942.9 344.0M943.5 350.5L950.0 344.0M950.6 350.5L956.0 345.1M989.1 183.0L993.5 187.4M984.5 185.5L993.5 194.5M984.5 192.5L993.5 201.5M984.5 199.6L993.5 208.6M984.5 206.7L993.5 215.7M984.5 213.8L993.5 222.8M1002.5 231.7L1006.0 235.3M984.5 220.8L993.5 229.8M994.8 231.1L1006.0 242.3M984.5 227.9L999.6 243.0M980.8 231.3L992.5 243.0M974.2 231.8L985.5 243.0M971.0 235.6L978.4 243.0M971.0 242.7L971.3 243.0M1001.3 273.0L1006.0 277.7M994.2 273.0L1005.3 284.1M987.2 273.0L998.8 284.6M980.1 273.0L993.5 286.4M973.0 273.0L993.5 293.5M971.0 278.0L977.4 284.5M984.5 291.5L993.5 300.5M984.5 298.6L993.5 307.6M984.5 305.7L993.5 314.7M984.5 312.7L993.5 321.7M984.5 319.8L993.5 328.8M984.5 326.9L991.6 334.0M984.5 334.0L984.5 334.0M968.0 177.5L970.5 175.0M968.0 181.8L974.8 175.0M972.0 182.0L979.0 175.0M976.2 182.0L983.2 175.0M980.5 182.0L987.5 175.0M984.7 182.0L991.7 175.0M989.0 182.0L996.0 175.0M993.2 182.0L1000.2 175.0M997.5 182.0L1004.5 175.0M1001.7 182.0L1008.7 175.0M1005.9 182.0L1009.0 178.9"/>
<path stroke="#ffffff" d="M919 219.5L969 219.5M968.5 173.5L968.5 236M919.93 218.93L919.93 241.68M919.93 230.07L950.57 230.07M928.28 228.21L928.28 241.68M891.14 227.28L919.93 227.28M891.14 227.28L891.14 275.57M891.14 235.64L919 235.64M891.14 232.86L907.86 232.86L907.86 227.28M907.86 235.64L907.86 232.86M919.93 241.68L947.78 241.68M919.93 275.57L919.93 241.68M929.03 275.57L929.03 242.14M947.78 231.93L947.78 274.64M947.78 231.93L961.71 231.93L964.49 235.64L964.49 241.68L947.78 241.68M951.03 244L951.03 271.85M963.1 244L963.1 271.85M968.21 218.93L968.21 231.93L971.92 231.93L971.92 274.64M950.57 236.57L954.28 236.57L954.28 240.28L960.78 240.28M906.46 220.78H915.28V224.96H906.46ZM938.5 210.11H942.4V218.93H938.5ZM951.03 217.53H956.6V221.25H951.03ZM953.35 223.11L953.35 230.07M954.28 223.11L954.28 230.07M892.5 276.5H906.5V285.5H892.5ZM930.5 276.5H947.5V285.5H930.5ZM892 273.5L970 273.5M919.5 258L919.5 297M928.5 258L928.5 290M948.5 258L948.5 290M951.5 258L951.5 276M962.5 258L962.5 276M970.5 243L970.5 284M907.5 276.5H919.5V285.5H907.5ZM948.5 273.5H962.5V285.5H948.5ZM892 285.5L970 285.5M924 297.5L958 297.5M924.5 297.5L924.5 393.5L956 393.5M956.5 297.5L956.5 387M932.5 298.5H954Q956 298.5 956 300.5V314.5Q956 316.5 954 316.5H932.5Q930.5 316.5 930.5 314.5V300.5Q930.5 298.5 932.5 298.5ZM932.5 322.5H954Q956 322.5 956 324.5V341.5Q956 343.5 954 343.5H932.5Q930.5 343.5 930.5 341.5V324.5Q930.5 322.5 932.5 322.5ZM932.5 350.5H954Q956 350.5 956 352.5V381.5Q956 383.5 954 383.5H932.5Q930.5 383.5 930.5 381.5V352.5Q930.5 350.5 932.5 350.5ZM958.5 300Q967 320 967.5 342Q966 366 960.5 384M956.5 298Q962 310 964.5 330M943.5 371.5H949.5V383.5H943.5ZM945.5 371.5L945.5 383.5M947.5 371.5L947.5 383.5M945 368.5H948V371.5H945ZM944.5 393.5H948.5V400.5H944.5ZM944.5 396.5L948.5 396.5M891 391.5L924.5 391.5M967.5 173.5L967.5 341.5M1009.5 173.5L1009.5 341.5M967.5 182.5L983 182.5M994 182.5L1009.5 182.5M967.5 334.5L983 334.5M994 334.5L1009.5 334.5M980 182.5Q984 184 984.5 190V224Q984 230 978 231.5H970.5V243.5H1006.5V231.5H999Q994 230 993.5 224V190Q994 184 998 182.5M970.5 272.5H1006.5V284.5H999Q994 286 993.5 292V326Q994 332 998 334.5M980 334.5Q984 332 984.5 326V292Q984 286 978 284.5H970.5M969 175.5L971 181L973 175.5M969 340.5L971 335.5L973 340.5M975 175.5L977 181L979 175.5M975 340.5L977 335.5L979 340.5M981 175.5L983 181L985 175.5M981 340.5L983 335.5L985 340.5M987 175.5L989 181L991 175.5M987 340.5L989 335.5L991 340.5M993 175.5L995 181L997 175.5M993 340.5L995 335.5L997 340.5M999 175.5L1001 181L1003 175.5M999 340.5L1001 335.5L1003 340.5M1005 175.5L1007 181L1009 175.5M1005 340.5L1007 335.5L1009 340.5M1006.5 243.5L1006.5 272.5M1006.5 250.5H1010.5V276H1006.5ZM1000.5 251.5H1008.5V255.5H1000.5ZM968.5 343L968.5 386.5M973.5 343L973.5 386.5M978.5 343L978.5 386.5M982.5 343L982.5 386.5M986.5 343L986.5 386.5M991.5 343L991.5 386.5M996.5 343L996.5 386.5M1002.5 343L1002.5 386.5M1008.5 343L1008.5 386.5M968.5 386.5L1008.5 386.5M968.5 343.5L1008.5 343.5"/>
<path stroke="#00ffff" d="M951.03 243.25L963.1 243.25M951.03 272.32L963.1 272.32M907.86 221.53L915.28 221.53M907.86 224.68L915.28 224.68M951.96 220.32H955.67V223.11H951.96ZM893 277L906 285M893 285L906 277M931 277L947 285M931 285L947 277M949 274.5L962 274.5M945 371L945 368.5L948 368.5L948 371M944.5 400.5L948.5 400.5M944.5 397.5L944.5 400.5M948.5 397.5L948.5 400.5M997.5 252Q997.5 249.5 1001 249.5H1008Q1011 250 1011 253.5Q1011 257 1008 257.5H1001Q997.5 257 997.5 254ZM975 245.5L978 249.5H994L997 247"/>
<path stroke="#ff0000" d="M908.78 222.46L920.85 222.46M894.86 229.61L899.03 254.21M892.07 232.86L897.64 232.86M903.21 229.61L899.03 254.21M900.43 232.86L906 232.86M899.03 253.28L899.03 256.25M897.18 256.25L901.82 256.25M934.78 231.93L938.5 253.28M938.5 231.93L938.5 253.28M942.21 231.93L938.5 253.28M937.1 251.89H939.42V255.6H937.1ZM936.17 210.57L945 210.57M957.07 224.5L971.92 224.5M907 290.5L920 290.5M956 292.5L970 292.5M965 174.5L1013 174.5M965 341.5L1013 341.5M1000 253.5L1010 253.5M1002 268.5L1012 268.5"/>
<path stroke="#ffffff" stroke-dasharray="1.5 1" d="M913.43 228.68L919 228.68M913.43 231L919 231M913.43 233.32L919 233.32M921.78 232.86L928.28 232.86M921.78 235.64L928.28 235.64M921.78 238.43L928.28 238.43M951.49 237.5L960.78 237.5M952.42 240.75L960.78 240.75M963.57 233.78L968.21 233.78M963.57 237.03L968.21 237.03M963.57 239.82L968.21 239.82M908 278L919 278M949 278L962 278M921 278L929 278M908 280.5L919 280.5M949 280.5L962 280.5M921 280.5L929 280.5M908 283L919 283M949 283L962 283M921 283L929 283"/>
<path stroke="#ff0000" stroke-dasharray="4 2" d="M930.6 234.71L946.85 234.71M930.6 236.57L946.85 236.57"/>
<path stroke="#ff0000" stroke-dasharray="5 2" d="M940.54 205L940.54 221.71M953.82 215.21L953.82 231"/>
<path stroke="#ff0000" stroke-dasharray="6 2" d="M946.5 366L946.5 400"/>
<path stroke="#ff0000" stroke-dasharray="10 2 2 2" d="M988.5 154L988.5 400"/>
</g>
<g shape-rendering="crispEdges">
<path stroke="#ffffff" d="M153.5 596L153.5 714.5M210.5 605.5L210.5 718.5M163.5 641.5H185.5V675.5H163.5Z"/>
<path stroke="#00ffff" d="M153.5 596.5H170.5L174 597.5L181 601L187 603.5L193 605.5H210.5M153.5 714.5H170L190 717L200 718L210.5 718.5"/>
<path stroke="#ff0000" d="M164.5 643.5L167 643.5M165.5 642.5L165.5 645M182.5 643.5L185 643.5M183.5 642.5L183.5 645M164.5 673.5L167 673.5M165.5 672.5L165.5 675M182.5 673.5L185 673.5M183.5 672.5L183.5 675"/>
<path stroke="#ff0000" stroke-dasharray="8 2 3 2" d="M147 658.5L216 658.5"/>
</g>
<g shape-rendering="crispEdges">
</g>
<g shape-rendering="crispEdges">
<path stroke="#ffffff" d="M882.5 586.5L882.5 751.5M882.5 704.5L1033.5 704.5M882.5 705.5L1033.5 705.5M882.5 712.5L1033.5 712.5M882.5 713.5L1033.5 713.5M882.5 751.5L1033.5 751.5"/>
<path stroke="#00ffff" d="M882.5 586.5L1033.5 586.5M882.5 592.5L1033.5 592.5M882.5 598.5L1033.5 598.5M882.5 604.5L1033.5 604.5M882.5 610.5L1033.5 610.5M882.5 616.5L1033.5 616.5M882.5 622.5L1033.5 622.5M882.5 628.5L1033.5 628.5M882.5 634.5L1033.5 634.5M882.5 640.5L1033.5 640.5M882.5 646.5L1033.5 646.5M882.5 651.5L1033.5 651.5M882.5 657.5L1033.5 657.5M882.5 663.5L1033.5 663.5M882.5 669.5L1033.5 669.5M882.5 675.5L1033.5 675.5M882.5 681.5L1033.5 681.5M882.5 687.5L1033.5 687.5M882.5 693.5L1033.5 693.5M882.5 699.5L1033.5 699.5M889.5 586.5L889.5 713M929.5 586.5L929.5 713M961.5 586.5L961.5 713M971.5 586.5L971.5 713M996.5 586.5L996.5 713M1006.5 586.5L1006.5 713M1016.5 586.5L1016.5 713M996.5 709.5L1016.5 709.5M882.5 717.5L933.5 717.5M882.5 720.5L933.5 720.5M882.5 726.5L933.5 726.5M882.5 730.5L933.5 730.5M882.5 733.5L933.5 733.5M882.5 738.5L933.5 738.5M882.5 743.5L933.5 743.5M882.5 747.5L933.5 747.5M888.5 713.5L888.5 751.5M894.5 713.5L894.5 751.5M913.5 713.5L913.5 730.5M925.5 713.5L925.5 730.5M908.5 730.5L908.5 751.5M922.5 730.5L922.5 751.5M933.5 713.5L933.5 751.5M933.5 733.5L983.5 733.5M933.5 741.5L983.5 741.5M933.5 747.5L983.5 747.5M950.5 733.5L950.5 747.5M961.5 733.5L961.5 747.5M972.5 733.5L972.5 747.5M939.5 741.5L939.5 747.5M945.5 741.5L945.5 747.5M983.5 713.5L983.5 751.5M983.5 726.5L1033.5 726.5M983.5 738.5L1033.5 738.5M958.5 747.5L958.5 751.5"/>
<path stroke="#ff00ff" d="M965.5 743.5H970.5V745.5H965.5ZM976 744.5L981 744.5M976.5 743L976.5 746M980.5 743L980.5 746"/>
</g>
<defs><filter id="px" x="0" y="0" width="100%" height="100%" filterUnits="userSpaceOnUse" color-interpolation-filters="sRGB"><feComponentTransfer><feFuncA type="discrete" tableValues="0 0 0 1 1 1 1 1 1"/></feComponentTransfer></filter></defs>
<g filter="url(#px)">
<text x="38" y="693.5" font-size="3.6" text-anchor="middle" stroke="#ff00ff" stroke-width="0.4">?</text>
<text x="54" y="693.5" font-size="3.6" text-anchor="middle" stroke="#ff00ff" stroke-width="0.4">?</text>
<text x="38" y="703.5" font-size="3.6" text-anchor="middle" stroke="#ff00ff" stroke-width="0.4">?</text>
<text x="54" y="703.5" font-size="3.6" text-anchor="middle" stroke="#ff00ff" stroke-width="0.4">?</text>
<text x="46" y="708.5" font-size="3.6" text-anchor="middle" stroke="#ff00ff" stroke-width="0.4">?</text>
<text x="38" y="713.5" font-size="3.6" text-anchor="middle" stroke="#ff00ff" stroke-width="0.4">?</text>
<text x="42" y="713.5" font-size="3.6" text-anchor="middle" stroke="#ff00ff" stroke-width="0.4">?</text>
<text x="46" y="713.5" font-size="3.6" text-anchor="middle" stroke="#ff00ff" stroke-width="0.4">?</text>
<text x="50" y="713.5" font-size="3.6" text-anchor="middle" stroke="#ff00ff" stroke-width="0.4">?</text>
<text x="54" y="713.5" font-size="3.6" text-anchor="middle" stroke="#ff00ff" stroke-width="0.4">?</text>
<text x="38" y="723.5" font-size="3.6" text-anchor="middle" stroke="#ff00ff" stroke-width="0.4">?</text>
<text x="44" y="723.5" font-size="3.6" text-anchor="middle" stroke="#ff00ff" stroke-width="0.4">?</text>
<text x="50" y="723.5" font-size="3.6" text-anchor="middle" stroke="#ff00ff" stroke-width="0.4">?</text>
<text x="54" y="723.5" font-size="3.6" text-anchor="middle" stroke="#ff00ff" stroke-width="0.4">?</text>
<text x="38" y="733.5" font-size="3.6" text-anchor="middle" stroke="#ff00ff" stroke-width="0.4">?</text>
<text x="54" y="733.5" font-size="3.6" text-anchor="middle" stroke="#ff00ff" stroke-width="0.4">?</text>
<text x="38" y="743.5" font-size="3.6" text-anchor="middle" stroke="#ff00ff" stroke-width="0.4">?</text>
<text x="54" y="743.5" font-size="3.6" text-anchor="middle" stroke="#ff00ff" stroke-width="0.4">?</text>
<text x="134.25" y="116.5" font-size="5.6" text-anchor="middle" textLength="2.6" lengthAdjust="spacingAndGlyphs">1</text>
<text x="212.25" y="116.5" font-size="5.6" text-anchor="middle" textLength="2.6" lengthAdjust="spacingAndGlyphs">2</text>
<text x="337.25" y="116.5" font-size="5.6" text-anchor="middle" textLength="2.6" lengthAdjust="spacingAndGlyphs">3</text>
<text x="410.25" y="116.5" font-size="5.6" text-anchor="middle" textLength="2.6" lengthAdjust="spacingAndGlyphs">4</text>
<text x="449.25" y="116.5" font-size="5.6" text-anchor="middle" textLength="2.6" lengthAdjust="spacingAndGlyphs">5</text>
<text x="510.75" y="116.5" font-size="5.6" text-anchor="middle" textLength="2.6" lengthAdjust="spacingAndGlyphs">6</text>
<text x="544.75" y="116.5" font-size="5.6" text-anchor="middle" textLength="2.6" lengthAdjust="spacingAndGlyphs">7</text>
<text x="290" y="509.5" font-size="5.6" text-anchor="middle" textLength="5.2" lengthAdjust="spacingAndGlyphs">14</text>
<text x="254" y="140.5" font-size="4.8" text-anchor="middle" stroke="#ff00ff" stroke-width="0.22" textLength="12" lengthAdjust="spacingAndGlyphs">B--B</text>
<text x="244" y="152" font-size="4.6" text-anchor="middle" stroke="#ff00ff" stroke-width="0.22" textLength="8.8" lengthAdjust="spacingAndGlyphs">1226</text>
<text x="242" y="168" font-size="4.6" text-anchor="middle" stroke="#ff00ff" stroke-width="0.22" textLength="6.6" lengthAdjust="spacingAndGlyphs">340</text>
<text x="272" y="164" font-size="7" text-anchor="middle">旋向</text>
<text x="87" y="326" font-size="4.6" text-anchor="middle" stroke="#ff00ff" stroke-width="0.22" transform="rotate(-90 87 326)" textLength="6.6" lengthAdjust="spacingAndGlyphs">770</text>
<text x="97" y="341" font-size="4.6" text-anchor="middle" stroke="#ff00ff" stroke-width="0.22" transform="rotate(-90 97 341)" textLength="6.6" lengthAdjust="spacingAndGlyphs">595</text>
<text x="197" y="277" font-size="4.6" text-anchor="middle" stroke="#ff00ff" stroke-width="0.22" textLength="6.6" lengthAdjust="spacingAndGlyphs">165</text>
<text x="187" y="406" font-size="5" stroke="#ff00ff" stroke-width="0.22">9</text>
<text x="221" y="413" font-size="4.6" text-anchor="middle" stroke="#ff00ff" stroke-width="0.22" textLength="6.6" lengthAdjust="spacingAndGlyphs">640</text>
<text x="297" y="413" font-size="4.6" text-anchor="middle" stroke="#ff00ff" stroke-width="0.22" textLength="6.6" lengthAdjust="spacingAndGlyphs">480</text>
<text x="387" y="423" font-size="4.6" text-anchor="middle" stroke="#ff00ff" stroke-width="0.22" textLength="8.8" lengthAdjust="spacingAndGlyphs">1048</text>
<text x="265" y="435" font-size="5.4" textLength="33" lengthAdjust="spacingAndGlyphs">1630(排料口最小时)</text>
<text x="368.5" y="275.5" font-size="5.5">A</text>
<text x="514" y="404" font-size="4.6" text-anchor="middle" stroke="#ff00ff" stroke-width="0.22" textLength="6.6" lengthAdjust="spacingAndGlyphs">700</text>
<text x="562" y="368" font-size="4.6" text-anchor="middle" stroke="#ff00ff" stroke-width="0.22" transform="rotate(-90 562 368)" textLength="6.6" lengthAdjust="spacingAndGlyphs">280</text>
<text x="612.5" y="341.5" font-size="5.5" text-anchor="middle">11</text>
<text x="612.5" y="349.5" font-size="5.5" text-anchor="middle">12</text>
<text x="612.5" y="356.5" font-size="5.5" text-anchor="middle">13</text>
<text x="613" y="270.5" font-size="5.5" text-anchor="middle">8</text>
<text x="613" y="277.5" font-size="5.5" text-anchor="middle">9</text>
<text x="613" y="285.5" font-size="5.5" text-anchor="middle">10</text>
<text x="762" y="155" font-size="4.6" text-anchor="middle" stroke="#ff00ff" stroke-width="0.22" textLength="6.6" lengthAdjust="spacingAndGlyphs">715</text>
<text x="913" y="155" font-size="4.6" text-anchor="middle" stroke="#ff00ff" stroke-width="0.22" textLength="4.4" lengthAdjust="spacingAndGlyphs">16</text>
<text x="686" y="165" font-size="4.6" text-anchor="middle" stroke="#ff00ff" stroke-width="0.22" textLength="6.6" lengthAdjust="spacingAndGlyphs">200</text>
<text x="837" y="165" font-size="4.6" text-anchor="middle" stroke="#ff00ff" stroke-width="0.22" textLength="6.6" lengthAdjust="spacingAndGlyphs">770</text>
<text x="837" y="173" font-size="4.6" text-anchor="middle" stroke="#ff00ff" stroke-width="0.22" textLength="6.6" lengthAdjust="spacingAndGlyphs">750</text>
<text x="989" y="165" font-size="4.6" text-anchor="middle" stroke="#ff00ff" stroke-width="0.22" textLength="6.6" lengthAdjust="spacingAndGlyphs">200</text>
<text x="836" y="134.5" font-size="5.5" text-anchor="middle">B</text>
<text x="835" y="454" font-size="5.5" text-anchor="middle">B</text>
<text x="903.5" y="213" font-size="5" stroke="#ff00ff" stroke-width="0.22">A</text>
<text x="651" y="284" font-size="4.6" text-anchor="middle" stroke="#ff00ff" stroke-width="0.22" transform="rotate(-90 651 284)" textLength="8.8" lengthAdjust="spacingAndGlyphs">1230</text>
<text x="658" y="258" font-size="4.6" text-anchor="middle" stroke="#ff00ff" stroke-width="0.22" transform="rotate(-90 658 258)" textLength="6.6" lengthAdjust="spacingAndGlyphs">980</text>
<text x="837" y="410" font-size="4.6" text-anchor="middle" stroke="#ff00ff" stroke-width="0.22" textLength="8.8" lengthAdjust="spacingAndGlyphs">1128</text>
<text x="837" y="423" font-size="4.6" text-anchor="middle" stroke="#ff00ff" stroke-width="0.22" textLength="8.8" lengthAdjust="spacingAndGlyphs">1240</text>
<text x="837" y="436" font-size="4.6" text-anchor="middle" stroke="#ff00ff" stroke-width="0.22" textLength="8.8" lengthAdjust="spacingAndGlyphs">1620</text>
<text x="846.5" y="303" font-size="4.6" text-anchor="middle" stroke="#ff00ff" stroke-width="0.22" textLength="6.6" lengthAdjust="spacingAndGlyphs">340</text>
<text x="831" y="313" font-size="5" stroke="#ff00ff" stroke-width="0.22">A</text>
<text x="901" y="311.5" font-size="5" stroke="#ff00ff" stroke-width="0.22">A</text>
<text x="188" y="582" font-size="6.5" text-anchor="middle">A</text>
<text x="200" y="582" font-size="6.5" text-anchor="middle">?</text>
<text x="174.5" y="631.5" font-size="5" text-anchor="middle" stroke="#ff00ff" stroke-width="0.22">10</text>
<text x="198" y="631.5" font-size="5" text-anchor="middle" stroke="#ff00ff" stroke-width="0.22">17</text>
<text x="172" y="654" font-size="5.5" text-anchor="middle">15</text>
<text x="171" y="669" font-size="5.5" text-anchor="middle">12</text>
<text x="192.5" y="660.5" font-size="5.5" text-anchor="middle">8</text>
<text x="290" y="581.5" font-size="5.5" text-anchor="middle">15</text>
<text x="290.5" y="619.5" font-size="5.5" text-anchor="middle">16</text>
<text x="416.5" y="584.5" font-size="6.8" textLength="26" lengthAdjust="spacingAndGlyphs">技术参数</text>
<text x="394" y="592.6" font-size="4.6" stroke="#ff00ff" stroke-width="0.22">1</text>
<text x="404.5" y="592.6" font-size="5.4" textLength="47" lengthAdjust="spacingAndGlyphs">进料口尺寸（宽×长）:</text>
<text x="471" y="592.6" font-size="5.2" stroke="#ff00ff" stroke-width="0.22" textLength="29" lengthAdjust="spacingAndGlyphs">375X750mm</text>
<text x="394" y="601" font-size="4.6" stroke="#ff00ff" stroke-width="0.22">2</text>
<text x="404.5" y="601" font-size="5.4" textLength="48" lengthAdjust="spacingAndGlyphs">排料口宽度调节范围:</text>
<text x="472.5" y="601" font-size="5.2" stroke="#ff00ff" stroke-width="0.22" textLength="22" lengthAdjust="spacingAndGlyphs">15-50mm</text>
<text x="394" y="609.4" font-size="4.6" stroke="#ff00ff" stroke-width="0.22">3</text>
<text x="405" y="609.4" font-size="5.4" textLength="30" lengthAdjust="spacingAndGlyphs">最大进料粒度</text>
<text x="470" y="609.4" font-size="5.2" stroke="#ff00ff" stroke-width="0.22" textLength="15" lengthAdjust="spacingAndGlyphs">310mm</text>
<text x="394" y="617.7" font-size="4.6" stroke="#ff00ff" stroke-width="0.22">4</text>
<text x="405" y="617.7" font-size="5.4" textLength="25" lengthAdjust="spacingAndGlyphs">偏心轴转速</text>
<text x="469" y="617.7" font-size="5.2" stroke="#ff00ff" stroke-width="0.22" textLength="24" lengthAdjust="spacingAndGlyphs">328r/min</text>
<text x="394" y="626" font-size="4.6" stroke="#ff00ff" stroke-width="0.22">5</text>
<text x="404.5" y="626" font-size="5.4" textLength="55" lengthAdjust="spacingAndGlyphs">产量(排料口尺寸为50时)  .</text>
<text x="473" y="626" font-size="5.2" stroke="#ff00ff" stroke-width="0.22" textLength="26" lengthAdjust="spacingAndGlyphs">10-35t/h</text>
<text x="394" y="634.8" font-size="4.6" stroke="#ff00ff" stroke-width="0.22">6</text>
<text x="404.5" y="634.8" font-size="5.4" textLength="25" lengthAdjust="spacingAndGlyphs">电动机 型号</text>
<text x="465" y="634.8" font-size="5.2" stroke="#ff00ff" stroke-width="0.22" textLength="25" lengthAdjust="spacingAndGlyphs">Y200L1-6</text>
<text x="418" y="643.2" font-size="5.4" textLength="7.5" lengthAdjust="spacingAndGlyphs">功率</text>
<text x="463" y="643.2" font-size="5.2" stroke="#ff00ff" stroke-width="0.22" textLength="18" lengthAdjust="spacingAndGlyphs">18.5kW</text>
<text x="418" y="651.5" font-size="5.4" textLength="7.5" lengthAdjust="spacingAndGlyphs">转速</text>
<text x="463" y="651.5" font-size="5.2" stroke="#ff00ff" stroke-width="0.22" textLength="24" lengthAdjust="spacingAndGlyphs">970r/min</text>
<text x="394" y="659.9" font-size="4.6" stroke="#ff00ff" stroke-width="0.22">7</text>
<text x="400.5" y="659.9" font-size="5.4" textLength="66" lengthAdjust="spacingAndGlyphs">外形尺寸（长X宽X高）:   .</text>
<text x="477" y="659.9" font-size="5.2" stroke="#ff00ff" stroke-width="0.22" textLength="48" lengthAdjust="spacingAndGlyphs">1630X1460X1170mm</text>
<text x="394" y="668.2" font-size="4.6" stroke="#ff00ff" stroke-width="0.22">8</text>
<text x="400.5" y="668.2" font-size="5.4" textLength="20" lengthAdjust="spacingAndGlyphs">机器重量</text>
<text x="467.5" y="668.2" font-size="5.2" stroke="#ff00ff" stroke-width="0.22" textLength="19" lengthAdjust="spacingAndGlyphs">4500kg</text>
<text x="636" y="589.5" font-size="6.8" textLength="25.5" lengthAdjust="spacingAndGlyphs">技术要求</text>
<text x="623" y="598.2" font-size="4.6" stroke="#ff00ff" stroke-width="0.22">1</text>
<text x="632.5" y="598.2" font-size="5.4" textLength="64" lengthAdjust="spacingAndGlyphs">装配前各零件均须清洗干净。</text>
<text x="623" y="607" font-size="4.6" stroke="#ff00ff" stroke-width="0.22">2</text>
<text x="632.5" y="607" font-size="5.4" textLength="69" lengthAdjust="spacingAndGlyphs">各润滑部位应注入适量润滑脂。</text>
<text x="623" y="615.3" font-size="4.6" stroke="#ff00ff" stroke-width="0.22">3</text>
<text x="632.5" y="615.3" font-size="5.4" textLength="121" lengthAdjust="spacingAndGlyphs">各润滑部位轴承温升不得超过35℃，最高温度不得大于</text>
<text x="632.5" y="623.3" font-size="5.4" textLength="69" lengthAdjust="spacingAndGlyphs">70℃，各紧固件不得松动。</text>
<text x="623" y="632.2" font-size="4.6" stroke="#ff00ff" stroke-width="0.22">4</text>
<text x="634.5" y="632.2" font-size="5.4" textLength="121.5" lengthAdjust="spacingAndGlyphs">破碎机空载试运转不少于2小时，运转应平稳无异常。</text>
<text x="623" y="640.4" font-size="4.6" stroke="#ff00ff" stroke-width="0.22">5</text>
<text x="632.5" y="640.4" font-size="5.4" textLength="117" lengthAdjust="spacingAndGlyphs">试车后，破碎机外表面涂漆，底漆、面漆各一遍。</text>
<text x="632.5" y="648.9" font-size="5.4" textLength="98.5" lengthAdjust="spacingAndGlyphs">颜色按用户要求，非加工面涂防锈漆。</text>
<text x="886" y="591.5" font-size="4.4" text-anchor="middle" stroke="#ff00ff" stroke-width="0.22">20</text>
<text x="895" y="591.5" font-size="4.4" stroke="#ff00ff" stroke-width="0.22" textLength="18" lengthAdjust="spacingAndGlyphs">K312.09-1</text>
<text x="930" y="592.1" font-size="6.6" textLength="12.6" lengthAdjust="spacingAndGlyphs">防护罩</text>
<text x="966.5" y="591.9" font-size="5.6" text-anchor="middle">1</text>
<text x="974" y="592" font-size="4.6" stroke="#ff00ff" stroke-width="0.22" textLength="8.8" lengthAdjust="spacingAndGlyphs">Q235</text>
<text x="886" y="597.5" font-size="4.4" text-anchor="middle" stroke="#ff00ff" stroke-width="0.22">19</text>
<text x="895" y="597.5" font-size="4.4" stroke="#ff00ff" stroke-width="0.22" textLength="18" lengthAdjust="spacingAndGlyphs">K312.08-6</text>
<text x="930" y="598.1" font-size="6.6" textLength="12.6" lengthAdjust="spacingAndGlyphs">调整垫</text>
<text x="966.5" y="597.9" font-size="5.6" text-anchor="middle">1</text>
<text x="974" y="598" font-size="4.6" stroke="#ff00ff" stroke-width="0.22" textLength="4.4" lengthAdjust="spacingAndGlyphs">45</text>
<text x="1001.5" y="597.5" font-size="4.4" text-anchor="middle" stroke="#ff00ff" stroke-width="0.22" textLength="4.2" lengthAdjust="spacingAndGlyphs">16</text>
<text x="1011.5" y="597.5" font-size="4.4" text-anchor="middle" stroke="#ff00ff" stroke-width="0.22" textLength="4.2" lengthAdjust="spacingAndGlyphs">16</text>
<text x="1025" y="597.5" font-size="4.2" text-anchor="middle" stroke="#ff00ff" stroke-width="0.22">备用</text>
<text x="886" y="603.5" font-size="4.4" text-anchor="middle" stroke="#ff00ff" stroke-width="0.22">18</text>
<text x="895" y="603.5" font-size="4.4" stroke="#ff00ff" stroke-width="0.22" textLength="18" lengthAdjust="spacingAndGlyphs">K312.08-5</text>
<text x="930" y="604.1" font-size="6.6" textLength="12.6" lengthAdjust="spacingAndGlyphs">调整座</text>
<text x="966.5" y="603.9" font-size="5.6" text-anchor="middle">1</text>
<text x="974" y="604" font-size="4.6" stroke="#ff00ff" stroke-width="0.22" textLength="4.4" lengthAdjust="spacingAndGlyphs">45</text>
<text x="1001.5" y="603.5" font-size="4.4" text-anchor="middle" stroke="#ff00ff" stroke-width="0.22" textLength="4.2" lengthAdjust="spacingAndGlyphs">12</text>
<text x="1011.5" y="603.5" font-size="4.4" text-anchor="middle" stroke="#ff00ff" stroke-width="0.22" textLength="4.2" lengthAdjust="spacingAndGlyphs">12</text>
<text x="1025" y="603.5" font-size="4.2" text-anchor="middle" stroke="#ff00ff" stroke-width="0.22">件</text>
<text x="886" y="609.5" font-size="4.4" text-anchor="middle" stroke="#ff00ff" stroke-width="0.22">17</text>
<text x="895" y="609.5" font-size="4.4" stroke="#ff00ff" stroke-width="0.22" textLength="14" lengthAdjust="spacingAndGlyphs">GB95-85</text>
<text x="930" y="610.1" font-size="6.6" textLength="14" lengthAdjust="spacingAndGlyphs">垫圈16</text>
<text x="966.5" y="609.9" font-size="5.6" text-anchor="middle">1</text>
<text x="974" y="610" font-size="4.6" stroke="#ff00ff" stroke-width="0.22" textLength="8.8" lengthAdjust="spacingAndGlyphs">Q235</text>
<text x="886" y="615.5" font-size="4.4" text-anchor="middle" stroke="#ff00ff" stroke-width="0.22">16</text>
<text x="895" y="615.5" font-size="4.4" stroke="#ff00ff" stroke-width="0.22" textLength="18" lengthAdjust="spacingAndGlyphs">GB6170-86</text>
<text x="930" y="616.1" font-size="6.6" textLength="14" lengthAdjust="spacingAndGlyphs">螺母M16</text>
<text x="966.5" y="615.9" font-size="4.6" text-anchor="middle" stroke="#ff00ff" stroke-width="0.22">4</text>
<text x="974" y="616" font-size="4.6" stroke="#ff00ff" stroke-width="0.22" textLength="8.8" lengthAdjust="spacingAndGlyphs">Q235</text>
<text x="1001.5" y="615.5" font-size="4.4" text-anchor="middle" stroke="#ff00ff" stroke-width="0.22" textLength="8.5" lengthAdjust="spacingAndGlyphs">0.034</text>
<text x="1011.5" y="615.5" font-size="4.4" text-anchor="middle" stroke="#ff00ff" stroke-width="0.22" textLength="8.5" lengthAdjust="spacingAndGlyphs">0.136</text>
<text x="886" y="621.5" font-size="4.4" text-anchor="middle" stroke="#ff00ff" stroke-width="0.22">15</text>
<text x="895" y="621.5" font-size="4.4" stroke="#ff00ff" stroke-width="0.22" textLength="18" lengthAdjust="spacingAndGlyphs">K312.07-6</text>
<text x="930" y="622.1" font-size="6.6" textLength="14" lengthAdjust="spacingAndGlyphs">拉杆弹簧</text>
<text x="966.5" y="621.9" font-size="5.6" text-anchor="middle">1</text>
<text x="974" y="622" font-size="4.6" stroke="#ff00ff" stroke-width="0.22" textLength="8.8" lengthAdjust="spacingAndGlyphs">65Mn</text>
<text x="1001.5" y="621.5" font-size="4.4" text-anchor="middle" stroke="#ff00ff" stroke-width="0.22" textLength="6.3" lengthAdjust="spacingAndGlyphs">3.2</text>
<text x="1011.5" y="621.5" font-size="4.4" text-anchor="middle" stroke="#ff00ff" stroke-width="0.22" textLength="6.3" lengthAdjust="spacingAndGlyphs">3.2</text>
<text x="886" y="627.5" font-size="4.4" text-anchor="middle" stroke="#ff00ff" stroke-width="0.22">14</text>
<text x="895" y="627.5" font-size="4.4" stroke="#ff00ff" stroke-width="0.22" textLength="18" lengthAdjust="spacingAndGlyphs">K312.07-2</text>
<text x="930" y="628.1" font-size="6.6" textLength="8.4" lengthAdjust="spacingAndGlyphs">拉杆</text>
<text x="966.5" y="627.9" font-size="5.6" text-anchor="middle">1</text>
<text x="974" y="628" font-size="4.6" stroke="#ff00ff" stroke-width="0.22" textLength="17.6" lengthAdjust="spacingAndGlyphs">HT200-20</text>
<text x="1001.5" y="627.5" font-size="4.4" text-anchor="middle" stroke="#ff00ff" stroke-width="0.22" textLength="6.3" lengthAdjust="spacingAndGlyphs">8.7</text>
<text x="1011.5" y="627.5" font-size="4.4" text-anchor="middle" stroke="#ff00ff" stroke-width="0.22" textLength="6.3" lengthAdjust="spacingAndGlyphs">8.7</text>
<text x="886" y="633.5" font-size="4.4" text-anchor="middle" stroke="#ff00ff" stroke-width="0.22">13</text>
<text x="895" y="633.5" font-size="4.4" stroke="#ff00ff" stroke-width="0.22" textLength="18" lengthAdjust="spacingAndGlyphs">GB97.1-85</text>
<text x="930" y="634.1" font-size="6.6" textLength="8.4" lengthAdjust="spacingAndGlyphs">垫圈</text>
<text x="945" y="633.5" font-size="4.6" stroke="#ff00ff" stroke-width="0.22" textLength="4.4" lengthAdjust="spacingAndGlyphs">20</text>
<text x="966.5" y="633.9" font-size="4.6" text-anchor="middle" stroke="#ff00ff" stroke-width="0.22">8</text>
<text x="974" y="634" font-size="4.6" stroke="#ff00ff" stroke-width="0.22" textLength="4.4" lengthAdjust="spacingAndGlyphs">A3</text>
<text x="1001.5" y="633.5" font-size="4.4" text-anchor="middle" stroke="#ff00ff" stroke-width="0.22" textLength="8.4" lengthAdjust="spacingAndGlyphs">0.02</text>
<text x="1011.5" y="633.5" font-size="4.4" text-anchor="middle" stroke="#ff00ff" stroke-width="0.22" textLength="8.4" lengthAdjust="spacingAndGlyphs">0.16</text>
<text x="886" y="639.5" font-size="4.4" text-anchor="middle" stroke="#ff00ff" stroke-width="0.22">12</text>
<text x="895" y="639.5" font-size="4.4" stroke="#ff00ff" stroke-width="0.22" textLength="14" lengthAdjust="spacingAndGlyphs">GB93-87</text>
<text x="930" y="640.1" font-size="6.6" textLength="8.4" lengthAdjust="spacingAndGlyphs">垫圈</text>
<text x="945" y="639.5" font-size="4.6" stroke="#ff00ff" stroke-width="0.22" textLength="4.4" lengthAdjust="spacingAndGlyphs">20</text>
<text x="966.5" y="639.9" font-size="4.6" text-anchor="middle" stroke="#ff00ff" stroke-width="0.22">4</text>
<text x="974" y="640" font-size="4.6" stroke="#ff00ff" stroke-width="0.22" textLength="4.4" lengthAdjust="spacingAndGlyphs">A3</text>
<text x="1001.5" y="639.5" font-size="4.4" text-anchor="middle" stroke="#ff00ff" stroke-width="0.22" textLength="8.4" lengthAdjust="spacingAndGlyphs">0.01</text>
<text x="1011.5" y="639.5" font-size="4.4" text-anchor="middle" stroke="#ff00ff" stroke-width="0.22" textLength="8.4" lengthAdjust="spacingAndGlyphs">0.04</text>
<text x="886" y="645.5" font-size="4.4" text-anchor="middle" stroke="#ff00ff" stroke-width="0.22">11</text>
<text x="895" y="645.5" font-size="4.4" stroke="#ff00ff" stroke-width="0.22" textLength="18" lengthAdjust="spacingAndGlyphs">GB5782-86</text>
<text x="930" y="646.1" font-size="6.6" textLength="8.4" lengthAdjust="spacingAndGlyphs">螺栓</text>
<text x="945" y="645.5" font-size="4.6" stroke="#ff00ff" stroke-width="0.22" textLength="13.2" lengthAdjust="spacingAndGlyphs">M20X80</text>
<text x="966.5" y="645.9" font-size="4.6" text-anchor="middle" stroke="#ff00ff" stroke-width="0.22">4</text>
<text x="974" y="646" font-size="4.6" stroke="#ff00ff" stroke-width="0.22" textLength="4.4" lengthAdjust="spacingAndGlyphs">A3</text>
<text x="1001.5" y="645.5" font-size="4.4" text-anchor="middle" stroke="#ff00ff" stroke-width="0.22" textLength="8.4" lengthAdjust="spacingAndGlyphs">0.28</text>
<text x="1011.5" y="645.5" font-size="4.4" text-anchor="middle" stroke="#ff00ff" stroke-width="0.22" textLength="8.4" lengthAdjust="spacingAndGlyphs">1.12</text>
<text x="886" y="651.5" font-size="4.4" text-anchor="middle" stroke="#ff00ff" stroke-width="0.22">10</text>
<text x="895" y="651.5" font-size="4.4" stroke="#ff00ff" stroke-width="0.22" textLength="18" lengthAdjust="spacingAndGlyphs">GB6170-86</text>
<text x="930" y="652.1" font-size="6.6" textLength="8.4" lengthAdjust="spacingAndGlyphs">螺母</text>
<text x="945" y="651.5" font-size="4.6" stroke="#ff00ff" stroke-width="0.22" textLength="6.6" lengthAdjust="spacingAndGlyphs">M24</text>
<text x="966.5" y="651.9" font-size="4.6" text-anchor="middle" stroke="#ff00ff" stroke-width="0.22">8</text>
<text x="974" y="652" font-size="4.6" stroke="#ff00ff" stroke-width="0.22" textLength="4.4" lengthAdjust="spacingAndGlyphs">A3</text>
<text x="1001.5" y="651.5" font-size="4.4" text-anchor="middle" stroke="#ff00ff" stroke-width="0.22" textLength="8.4" lengthAdjust="spacingAndGlyphs">0.11</text>
<text x="1011.5" y="651.5" font-size="4.4" text-anchor="middle" stroke="#ff00ff" stroke-width="0.22" textLength="8.4" lengthAdjust="spacingAndGlyphs">0.88</text>
<text x="886" y="656.5" font-size="4.4" text-anchor="middle" stroke="#ff00ff" stroke-width="0.22">9</text>
<text x="895" y="656.5" font-size="4.4" stroke="#ff00ff" stroke-width="0.22" textLength="14" lengthAdjust="spacingAndGlyphs">GB93-87</text>
<text x="930" y="657.1" font-size="6.6" textLength="8.4" lengthAdjust="spacingAndGlyphs">垫圈</text>
<text x="945" y="656.5" font-size="4.6" stroke="#ff00ff" stroke-width="0.22" textLength="4.4" lengthAdjust="spacingAndGlyphs">24</text>
<text x="966.5" y="656.9" font-size="4.6" text-anchor="middle" stroke="#ff00ff" stroke-width="0.22">4</text>
<text x="974" y="657" font-size="4.6" stroke="#ff00ff" stroke-width="0.22" textLength="4.4" lengthAdjust="spacingAndGlyphs">A3</text>
<text x="1001.5" y="656.5" font-size="4.4" text-anchor="middle" stroke="#ff00ff" stroke-width="0.22" textLength="8.4" lengthAdjust="spacingAndGlyphs">0.03</text>
<text x="1011.5" y="656.5" font-size="4.4" text-anchor="middle" stroke="#ff00ff" stroke-width="0.22" textLength="8.4" lengthAdjust="spacingAndGlyphs">0.12</text>
<text x="886" y="662.5" font-size="4.4" text-anchor="middle" stroke="#ff00ff" stroke-width="0.22">8</text>
<text x="895" y="662.5" font-size="4.4" stroke="#ff00ff" stroke-width="0.22" textLength="18" lengthAdjust="spacingAndGlyphs">K312.06-0</text>
<text x="930" y="663.1" font-size="6.6" textLength="14" lengthAdjust="spacingAndGlyphs">T型螺栓</text>
<text x="945" y="662.5" font-size="4.6" stroke="#ff00ff" stroke-width="0.22" textLength="15" lengthAdjust="spacingAndGlyphs">M24X120</text>
<text x="966.5" y="662.9" font-size="4.6" text-anchor="middle" stroke="#ff00ff" stroke-width="0.22">4</text>
<text x="974" y="663" font-size="4.6" stroke="#ff00ff" stroke-width="0.22" textLength="4.4" lengthAdjust="spacingAndGlyphs">A3</text>
<text x="1001.5" y="662.5" font-size="4.4" text-anchor="middle" stroke="#ff00ff" stroke-width="0.22" textLength="8.4" lengthAdjust="spacingAndGlyphs">0.62</text>
<text x="1011.5" y="662.5" font-size="4.4" text-anchor="middle" stroke="#ff00ff" stroke-width="0.22" textLength="8.4" lengthAdjust="spacingAndGlyphs">2.48</text>
<text x="1025" y="662.5" font-size="4.2" text-anchor="middle" stroke="#ff00ff" stroke-width="0.22">外购</text>
<text x="886" y="668.5" font-size="4.4" text-anchor="middle" stroke="#ff00ff" stroke-width="0.22">7</text>
<text x="895" y="668.5" font-size="4.4" stroke="#ff00ff" stroke-width="0.22" textLength="16" lengthAdjust="spacingAndGlyphs">Y200L1-6</text>
<text x="930" y="669.1" font-size="6.6" textLength="12.6" lengthAdjust="spacingAndGlyphs">电动机</text>
<text x="945" y="668.5" font-size="4.6" stroke="#ff00ff" stroke-width="0.22" textLength="13.2" lengthAdjust="spacingAndGlyphs">18.5kW</text>
<text x="966.5" y="668.9" font-size="5.6" text-anchor="middle">1</text>
<text x="974" y="669" font-size="6.2" textLength="9" lengthAdjust="spacingAndGlyphs">组合件</text>
<text x="1001.5" y="668.5" font-size="4.4" text-anchor="middle" stroke="#ff00ff" stroke-width="0.22" textLength="6.3" lengthAdjust="spacingAndGlyphs">220</text>
<text x="1011.5" y="668.5" font-size="4.4" text-anchor="middle" stroke="#ff00ff" stroke-width="0.22" textLength="6.3" lengthAdjust="spacingAndGlyphs">220</text>
<text x="886" y="674.5" font-size="4.4" text-anchor="middle" stroke="#ff00ff" stroke-width="0.22">6</text>
<text x="895" y="674.5" font-size="4.4" stroke="#ff00ff" stroke-width="0.22" textLength="18" lengthAdjust="spacingAndGlyphs">GB1171-74</text>
<text x="930" y="675.1" font-size="6.6" textLength="12.6" lengthAdjust="spacingAndGlyphs">三角带</text>
<text x="945" y="674.5" font-size="4.6" stroke="#ff00ff" stroke-width="0.22" textLength="13.2" lengthAdjust="spacingAndGlyphs">C-4500</text>
<text x="966.5" y="674.9" font-size="4.6" text-anchor="middle" stroke="#ff00ff" stroke-width="0.22">5</text>
<text x="974" y="675" font-size="6.2" textLength="6" lengthAdjust="spacingAndGlyphs">橡胶</text>
<text x="1001.5" y="674.5" font-size="4.4" text-anchor="middle" stroke="#ff00ff" stroke-width="0.22" textLength="6.3" lengthAdjust="spacingAndGlyphs">1.5</text>
<text x="1011.5" y="674.5" font-size="4.4" text-anchor="middle" stroke="#ff00ff" stroke-width="0.22" textLength="6.3" lengthAdjust="spacingAndGlyphs">7.5</text>
<text x="886" y="680.5" font-size="4.4" text-anchor="middle" stroke="#ff00ff" stroke-width="0.22">5</text>
<text x="895" y="680.5" font-size="4.4" stroke="#ff00ff" stroke-width="0.22" textLength="18" lengthAdjust="spacingAndGlyphs">K312.04-1</text>
<text x="930" y="681.1" font-size="6.6" textLength="14" lengthAdjust="spacingAndGlyphs">电机滑轨</text>
<text x="966.5" y="680.9" font-size="5.6" text-anchor="middle">1</text>
<text x="974" y="681" font-size="6.2" textLength="18" lengthAdjust="spacingAndGlyphs">组合件-HT</text>
<text x="1001.5" y="680.5" font-size="4.4" text-anchor="middle" stroke="#ff00ff" stroke-width="0.22" textLength="4.2" lengthAdjust="spacingAndGlyphs">85</text>
<text x="1011.5" y="680.5" font-size="4.4" text-anchor="middle" stroke="#ff00ff" stroke-width="0.22" textLength="4.2" lengthAdjust="spacingAndGlyphs">85</text>
<text x="886" y="686.5" font-size="4.4" text-anchor="middle" stroke="#ff00ff" stroke-width="0.22">4</text>
<text x="895" y="686.5" font-size="4.4" stroke="#ff00ff" stroke-width="0.22" textLength="14" lengthAdjust="spacingAndGlyphs">K312.03</text>
<text x="930" y="687.1" font-size="6.6" textLength="12.6" lengthAdjust="spacingAndGlyphs">动颚部</text>
<text x="966.5" y="686.9" font-size="4.6" text-anchor="middle" stroke="#ff00ff" stroke-width="0.22">2</text>
<text x="974" y="687" font-size="6.2" textLength="9" lengthAdjust="spacingAndGlyphs">组合件</text>
<text x="1001.5" y="686.5" font-size="4.4" text-anchor="middle" stroke="#ff00ff" stroke-width="0.22" textLength="6.3" lengthAdjust="spacingAndGlyphs">780</text>
<text x="1011.5" y="686.5" font-size="4.4" text-anchor="middle" stroke="#ff00ff" stroke-width="0.22" textLength="8.4" lengthAdjust="spacingAndGlyphs">1560</text>
<text x="886" y="692.5" font-size="4.4" text-anchor="middle" stroke="#ff00ff" stroke-width="0.22">3</text>
<text x="895" y="692.5" font-size="4.4" stroke="#ff00ff" stroke-width="0.22" textLength="14" lengthAdjust="spacingAndGlyphs">K312.02</text>
<text x="930" y="693.1" font-size="6.6" textLength="12.6" lengthAdjust="spacingAndGlyphs">调整部</text>
<text x="966.5" y="692.9" font-size="5.6" text-anchor="middle">1</text>
<text x="974" y="693" font-size="6.2" textLength="9" lengthAdjust="spacingAndGlyphs">组合件</text>
<text x="1001.5" y="692.5" font-size="4.4" text-anchor="middle" stroke="#ff00ff" stroke-width="0.22" textLength="6.3" lengthAdjust="spacingAndGlyphs">160</text>
<text x="1011.5" y="692.5" font-size="4.4" text-anchor="middle" stroke="#ff00ff" stroke-width="0.22" textLength="6.3" lengthAdjust="spacingAndGlyphs">160</text>
<text x="1025" y="692.5" font-size="4.2" text-anchor="middle" stroke="#ff00ff" stroke-width="0.22">外购</text>
<text x="886" y="698.5" font-size="4.4" text-anchor="middle" stroke="#ff00ff" stroke-width="0.22">2</text>
<text x="895" y="698.5" font-size="4.4" stroke="#ff00ff" stroke-width="0.22" textLength="14" lengthAdjust="spacingAndGlyphs">K312.01</text>
<text x="930" y="699.1" font-size="6.6" textLength="12.6" lengthAdjust="spacingAndGlyphs">机架部</text>
<text x="966.5" y="698.9" font-size="5.6" text-anchor="middle">1</text>
<text x="974" y="699" font-size="6.2" textLength="9" lengthAdjust="spacingAndGlyphs">组合件</text>
<text x="1001.5" y="698.5" font-size="4.4" text-anchor="middle" stroke="#ff00ff" stroke-width="0.22" textLength="8.4" lengthAdjust="spacingAndGlyphs">1520</text>
<text x="1011.5" y="698.5" font-size="4.4" text-anchor="middle" stroke="#ff00ff" stroke-width="0.22" textLength="8.4" lengthAdjust="spacingAndGlyphs">1520</text>
<text x="886" y="704.5" font-size="4.4" text-anchor="middle" stroke="#ff00ff" stroke-width="0.22">1</text>
<text x="895" y="704.5" font-size="4.4" stroke="#ff00ff" stroke-width="0.22" textLength="14" lengthAdjust="spacingAndGlyphs">K312.00</text>
<text x="930" y="705.1" font-size="6.6" textLength="8.4" lengthAdjust="spacingAndGlyphs">肘板</text>
<text x="966.5" y="704.9" font-size="5.6" text-anchor="middle">1</text>
<text x="974" y="705" font-size="6.2" textLength="9" lengthAdjust="spacingAndGlyphs">组合件</text>
<text x="1001.5" y="704.5" font-size="4.4" text-anchor="middle" stroke="#ff00ff" stroke-width="0.22" textLength="4.2" lengthAdjust="spacingAndGlyphs">38</text>
<text x="1011.5" y="704.5" font-size="4.4" text-anchor="middle" stroke="#ff00ff" stroke-width="0.22" textLength="4.2" lengthAdjust="spacingAndGlyphs">38</text>
<text x="883.5" y="711" font-size="4.2" text-anchor="middle" stroke="#ff00ff" stroke-width="0.22">?</text>
<text x="886.5" y="711" font-size="4.2" text-anchor="middle" stroke="#ff00ff" stroke-width="0.22">?</text>
<text x="893" y="711" font-size="4.2" text-anchor="middle" stroke="#ff00ff" stroke-width="0.22">?</text>
<text x="909.5" y="711" font-size="4.2" text-anchor="middle" stroke="#ff00ff" stroke-width="0.22">?</text>
<text x="918.5" y="711" font-size="4.2" text-anchor="middle" stroke="#ff00ff" stroke-width="0.22">?</text>
<text x="954" y="711" font-size="4.2" text-anchor="middle" stroke="#ff00ff" stroke-width="0.22">?</text>
<text x="963" y="711" font-size="4.2" text-anchor="middle" stroke="#ff00ff" stroke-width="0.22">?</text>
<text x="966" y="711" font-size="4.2" text-anchor="middle" stroke="#ff00ff" stroke-width="0.22">?</text>
<text x="972" y="711" font-size="4.2" text-anchor="middle" stroke="#ff00ff" stroke-width="0.22">?</text>
<text x="986" y="711" font-size="4.2" text-anchor="middle" stroke="#ff00ff" stroke-width="0.22">?</text>
<text x="1001" y="711" font-size="4.2" text-anchor="middle" stroke="#ff00ff" stroke-width="0.22">?</text>
<text x="1010" y="711" font-size="4.2" text-anchor="middle" stroke="#ff00ff" stroke-width="0.22">?</text>
<text x="1022" y="711" font-size="4.2" text-anchor="middle" stroke="#ff00ff" stroke-width="0.22">?</text>
<text x="1028" y="711" font-size="4.2" text-anchor="middle" stroke="#ff00ff" stroke-width="0.22">?</text>
<text x="998" y="708.4" font-size="3.6" text-anchor="middle" stroke="#ff00ff" stroke-width="0.4">?</text>
<text x="1000.5" y="708.4" font-size="3.6" text-anchor="middle" stroke="#ff00ff" stroke-width="0.4">?</text>
<text x="1003" y="708.4" font-size="3.6" text-anchor="middle" stroke="#ff00ff" stroke-width="0.4">?</text>
<text x="1008" y="708.4" font-size="3.6" text-anchor="middle" stroke="#ff00ff" stroke-width="0.4">?</text>
<text x="1010.5" y="708.4" font-size="3.6" text-anchor="middle" stroke="#ff00ff" stroke-width="0.4">?</text>
<text x="1013" y="708.4" font-size="3.6" text-anchor="middle" stroke="#ff00ff" stroke-width="0.4">?</text>
<text x="1008.5" y="725" font-size="12.5" text-anchor="middle" textLength="35" lengthAdjust="spacingAndGlyphs">???????</text>
<text x="1008.5" y="734" font-size="5.6" text-anchor="middle" textLength="35" lengthAdjust="spacingAndGlyphs">PEJ-375X750</text>
<text x="1007" y="738" font-size="4.6" text-anchor="middle" stroke="#ff00ff" stroke-width="0.22" textLength="12" lengthAdjust="spacingAndGlyphs">装配图</text>
<text x="1008.5" y="747.5" font-size="6.4" text-anchor="middle" textLength="24" lengthAdjust="spacingAndGlyphs">K.312.00</text>
<text x="954" y="726" font-size="4.6" text-anchor="middle" stroke="#ff00ff" stroke-width="0.22">?1</text>
<text x="885.5" y="730" font-size="3.8" text-anchor="middle" stroke="#ff00ff" stroke-width="0.4">??</text>
<text x="891.5" y="730" font-size="3.8" text-anchor="middle" stroke="#ff00ff" stroke-width="0.4">?</text>
<text x="904" y="730" font-size="3.8" text-anchor="middle" stroke="#ff00ff" stroke-width="0.4">?????</text>
<text x="919.5" y="730" font-size="3.8" text-anchor="middle" stroke="#ff00ff" stroke-width="0.4">??</text>
<text x="929.5" y="730" font-size="3.8" text-anchor="middle" stroke="#ff00ff" stroke-width="0.4">??</text>
<text x="885.5" y="737.5" font-size="3.8" text-anchor="middle" stroke="#ff00ff" stroke-width="0.4">??</text>
<text x="901" y="737.5" font-size="3.8" text-anchor="middle" stroke="#ff00ff" stroke-width="0.4">???</text>
<text x="916" y="737.5" font-size="3.8" text-anchor="middle" stroke="#ff00ff" stroke-width="0.4">??</text>
<text x="885.5" y="742.8" font-size="3.8" text-anchor="middle" stroke="#ff00ff" stroke-width="0.4">??</text>
<text x="885.5" y="747" font-size="3.8" text-anchor="middle" stroke="#ff00ff" stroke-width="0.4">??</text>
<text x="901" y="747" font-size="3.8" text-anchor="middle" stroke="#ff00ff" stroke-width="0.4">??</text>
<text x="916" y="747" font-size="3.8" text-anchor="middle" stroke="#ff00ff" stroke-width="0.4">??</text>
<text x="885.5" y="751" font-size="3.8" text-anchor="middle" stroke="#ff00ff" stroke-width="0.4">??</text>
<text x="901" y="751" font-size="3.8" text-anchor="middle" stroke="#ff00ff" stroke-width="0.4">?</text>
<text x="928" y="751" font-size="3.8" text-anchor="middle" stroke="#ff00ff" stroke-width="0.4">???</text>
<text x="942" y="740.5" font-size="3.8" text-anchor="middle" stroke="#ff00ff" stroke-width="0.4">????</text>
<text x="956" y="740.5" font-size="3.8" text-anchor="middle" stroke="#ff00ff" stroke-width="0.4">??</text>
<text x="967" y="740.5" font-size="3.8" text-anchor="middle" stroke="#ff00ff" stroke-width="0.4">??</text>
<text x="978" y="740.5" font-size="3.8" text-anchor="middle" stroke="#ff00ff" stroke-width="0.4">??</text>
<text x="946" y="751" font-size="3.8" text-anchor="middle" stroke="#ff00ff" stroke-width="0.4">??</text>
<text x="971" y="751" font-size="3.8" text-anchor="middle" stroke="#ff00ff" stroke-width="0.4">??</text>
</g>
</svg></body></html>
